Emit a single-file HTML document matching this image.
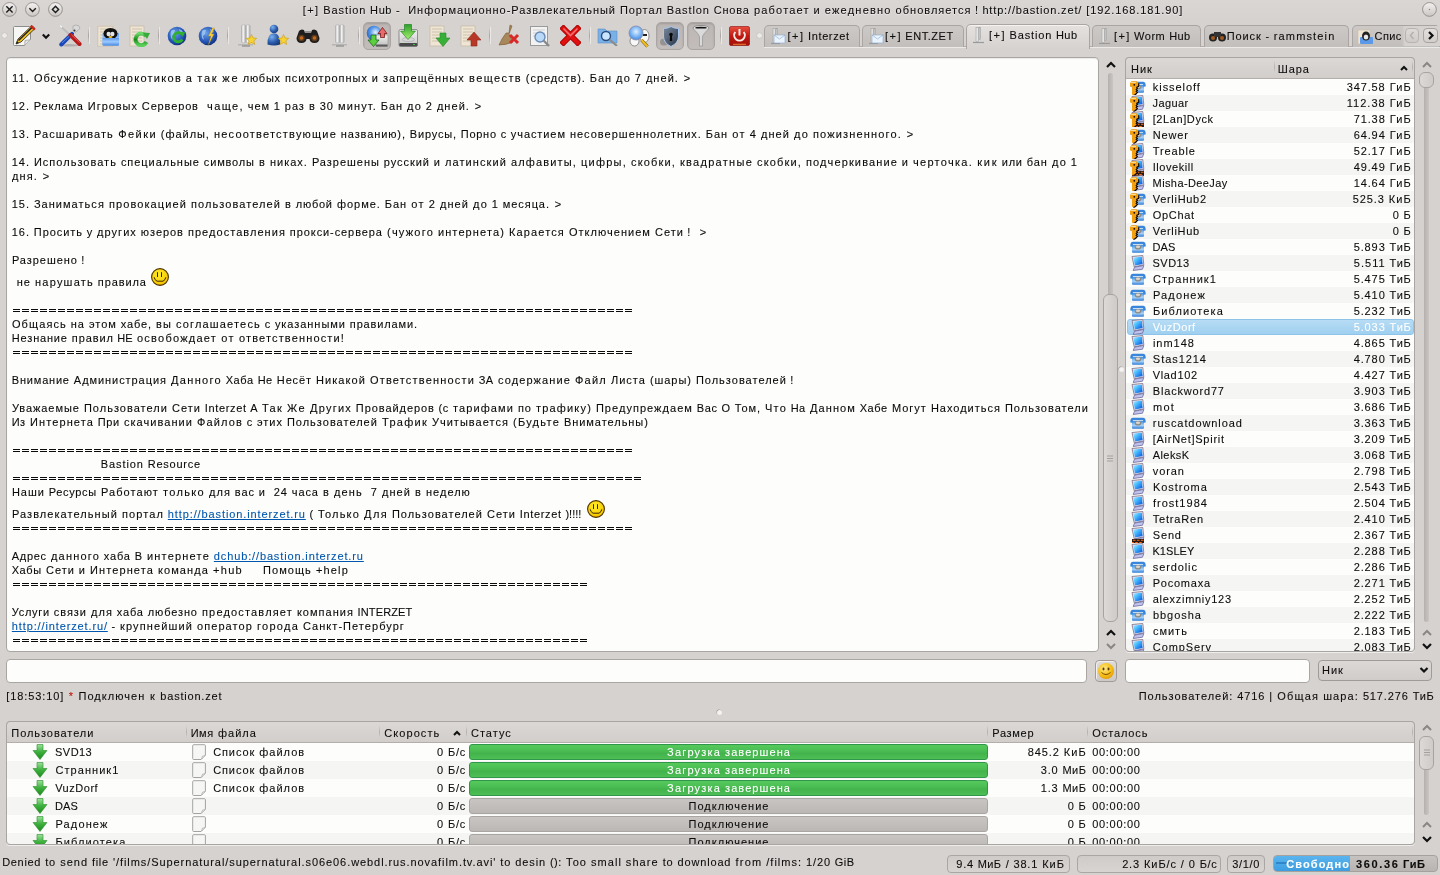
<!DOCTYPE html><html><head><meta charset="utf-8"><style>
html,body{margin:0;padding:0;}
body{width:1440px;height:875px;overflow:hidden;position:relative;background:#d6d2d0;font-family:"Liberation Sans",sans-serif;}
.t{position:absolute;white-space:pre;-webkit-text-stroke:0.1px currentColor;}
a{color:#0057ae;text-decoration:underline;}
</style></head><body><div id="root" style="position:absolute;left:0;top:0;width:1440px;height:875px;will-change:transform"><div style="position:absolute;left:0px;top:0px;width:1440px;height:20px;background:linear-gradient(#dad6d4,#d6d2d0)"></div>
<div style="position:absolute;left:6px;top:57px;width:1093px;height:595px;background:#fdfdfc;border:1px solid #a9a5a2;border-radius:4px;box-sizing:border-box;box-shadow:inset 0 1px 1px rgba(0,0,0,0.08)"></div>
<div style="position:absolute;left:1125px;top:57px;width:290px;height:595px;background:#fdfdfc;border:1px solid #a9a5a2;border-radius:4px;box-sizing:border-box;overflow:hidden"></div>
<div style="position:absolute;left:6px;top:659px;width:1081px;height:24px;background:#fdfdfc;border:1px solid #a9a5a2;border-radius:4px;box-sizing:border-box"></div>
<div style="position:absolute;left:1095px;top:660px;width:22px;height:22px;background:linear-gradient(#dedad8,#cdc9c6);border:1px solid #a09b98;border-radius:4px;box-sizing:border-box;box-shadow:inset 1px 1px 0 #f2f0ef"></div>
<div style="position:absolute;left:1125px;top:659px;width:185px;height:24px;background:#fdfdfc;border:1px solid #a9a5a2;border-radius:4px;box-sizing:border-box"></div>
<div style="position:absolute;left:1318px;top:660px;width:114px;height:21px;background:linear-gradient(#dcd8d6,#d0ccc9);border:1px solid #a09b98;border-radius:4px;box-sizing:border-box"></div>
<div style="position:absolute;left:6px;top:721px;width:1409px;height:124px;background:#fdfdfc;border:1px solid #a9a5a2;border-radius:4px;box-sizing:border-box;overflow:hidden"></div>
<div class="t" style="left:11.99px;top:72px;font-size:11px;line-height:13px;color:#0a0a0a;font-weight:normal;letter-spacing:1.172px;">11.</div>
<div class="t" style="left:33.90px;top:72px;font-size:11px;line-height:13px;color:#0a0a0a;font-weight:normal;letter-spacing:0.991px;">Обсуждение</div>
<div class="t" style="left:112.04px;top:72px;font-size:11px;line-height:13px;color:#0a0a0a;font-weight:normal;letter-spacing:1.280px;">наркотиков</div>
<div class="t" style="left:185.84px;top:72px;font-size:11px;line-height:13px;color:#0a0a0a;font-weight:normal;letter-spacing:0.875px;">а</div>
<div class="t" style="left:197.26px;top:72px;font-size:11px;line-height:13px;color:#0a0a0a;font-weight:normal;letter-spacing:1.714px;">так</div>
<div class="t" style="left:222.28px;top:72px;font-size:11px;line-height:13px;color:#0a0a0a;font-weight:normal;letter-spacing:1.758px;">же</div>
<div class="t" style="left:242.76px;top:72px;font-size:11px;line-height:13px;color:#0a0a0a;font-weight:normal;letter-spacing:0.725px;">любых</div>
<div class="t" style="left:284.88px;top:72px;font-size:11px;line-height:13px;color:#0a0a0a;font-weight:normal;letter-spacing:0.952px;">психотропных</div>
<div class="t" style="left:371.82px;top:72px;font-size:11px;line-height:13px;color:#0a0a0a;font-weight:normal;letter-spacing:0.844px;">и</div>
<div class="t" style="left:382.94px;top:72px;font-size:11px;line-height:13px;color:#0a0a0a;font-weight:normal;letter-spacing:1.084px;">запрещённых</div>
<div class="t" style="left:469.10px;top:72px;font-size:11px;line-height:13px;color:#0a0a0a;font-weight:normal;letter-spacing:1.391px;">веществ</div>
<div class="t" style="left:525.87px;top:72px;font-size:11px;line-height:13px;color:#0a0a0a;font-weight:normal;letter-spacing:0.931px;">(средств).</div>
<div class="t" style="left:589.83px;top:72px;font-size:11px;line-height:13px;color:#0a0a0a;font-weight:normal;letter-spacing:0.859px;">Бан</div>
<div class="t" style="left:616.01px;top:72px;font-size:11px;line-height:13px;color:#0a0a0a;font-weight:normal;letter-spacing:1.227px;">до</div>
<div class="t" style="left:634.84px;top:72px;font-size:11px;line-height:13px;color:#0a0a0a;font-weight:normal;letter-spacing:0.875px;">7</div>
<div class="t" style="left:645.92px;top:72px;font-size:11px;line-height:13px;color:#0a0a0a;font-weight:normal;letter-spacing:1.038px;">дней.</div>
<div class="t" style="left:683.68px;top:72px;font-size:11px;line-height:13px;color:#0a0a0a;font-weight:normal;letter-spacing:2.562px;">&gt;</div>
<div class="t" style="left:11.85px;top:100px;font-size:11px;line-height:13px;color:#0a0a0a;font-weight:normal;letter-spacing:0.901px;">12.</div>
<div class="t" style="left:33.82px;top:100px;font-size:11px;line-height:13px;color:#0a0a0a;font-weight:normal;letter-spacing:0.839px;">Реклама</div>
<div class="t" style="left:87.87px;top:100px;font-size:11px;line-height:13px;color:#0a0a0a;font-weight:normal;letter-spacing:0.942px;">Игровых</div>
<div class="t" style="left:141.83px;top:100px;font-size:11px;line-height:13px;color:#0a0a0a;font-weight:normal;letter-spacing:0.861px;">Серверов</div>
<div class="t" style="left:207.10px;top:100px;font-size:11px;line-height:13px;color:#0a0a0a;font-weight:normal;letter-spacing:1.409px;">чаще,</div>
<div class="t" style="left:247.83px;top:100px;font-size:11px;line-height:13px;color:#0a0a0a;font-weight:normal;letter-spacing:0.859px;">чем</div>
<div class="t" style="left:273.84px;top:100px;font-size:11px;line-height:13px;color:#0a0a0a;font-weight:normal;letter-spacing:0.875px;">1</div>
<div class="t" style="left:284.87px;top:100px;font-size:11px;line-height:13px;color:#0a0a0a;font-weight:normal;letter-spacing:0.948px;">раз</div>
<div class="t" style="left:308.98px;top:100px;font-size:11px;line-height:13px;color:#0a0a0a;font-weight:normal;letter-spacing:1.156px;">в</div>
<div class="t" style="left:319.84px;top:100px;font-size:11px;line-height:13px;color:#0a0a0a;font-weight:normal;letter-spacing:0.875px;">30</div>
<div class="t" style="left:337.97px;top:100px;font-size:11px;line-height:13px;color:#0a0a0a;font-weight:normal;letter-spacing:1.138px;">минут.</div>
<div class="t" style="left:380.83px;top:100px;font-size:11px;line-height:13px;color:#0a0a0a;font-weight:normal;letter-spacing:0.859px;">Бан</div>
<div class="t" style="left:407.01px;top:100px;font-size:11px;line-height:13px;color:#0a0a0a;font-weight:normal;letter-spacing:1.227px;">до</div>
<div class="t" style="left:425.84px;top:100px;font-size:11px;line-height:13px;color:#0a0a0a;font-weight:normal;letter-spacing:0.875px;">2</div>
<div class="t" style="left:436.92px;top:100px;font-size:11px;line-height:13px;color:#0a0a0a;font-weight:normal;letter-spacing:1.038px;">дней.</div>
<div class="t" style="left:474.68px;top:100px;font-size:11px;line-height:13px;color:#0a0a0a;font-weight:normal;letter-spacing:2.562px;">&gt;</div>
<div class="t" style="left:11.85px;top:128px;font-size:11px;line-height:13px;color:#0a0a0a;font-weight:normal;letter-spacing:0.901px;">13.</div>
<div class="t" style="left:33.94px;top:128px;font-size:11px;line-height:13px;color:#0a0a0a;font-weight:normal;letter-spacing:1.075px;">Расшаривать</div>
<div class="t" style="left:118.14px;top:128px;font-size:11px;line-height:13px;color:#0a0a0a;font-weight:normal;letter-spacing:1.481px;">Фейки</div>
<div class="t" style="left:160.87px;top:128px;font-size:11px;line-height:13px;color:#0a0a0a;font-weight:normal;letter-spacing:0.949px;">(файлы,</div>
<div class="t" style="left:214.00px;top:128px;font-size:11px;line-height:13px;color:#0a0a0a;font-weight:normal;letter-spacing:1.210px;">несоответствующие</div>
<div class="t" style="left:340.84px;top:128px;font-size:11px;line-height:13px;color:#0a0a0a;font-weight:normal;letter-spacing:0.886px;">названию),</div>
<div class="t" style="left:409.81px;top:128px;font-size:11px;line-height:13px;color:#0a0a0a;font-weight:normal;letter-spacing:0.810px;">Вирусы,</div>
<div class="t" style="left:460.77px;top:128px;font-size:11px;line-height:13px;color:#0a0a0a;font-weight:normal;letter-spacing:0.731px;">Порно</div>
<div class="t" style="left:500.65px;top:128px;font-size:11px;line-height:13px;color:#0a0a0a;font-weight:normal;letter-spacing:0.500px;">с</div>
<div class="t" style="left:510.86px;top:128px;font-size:11px;line-height:13px;color:#0a0a0a;font-weight:normal;letter-spacing:0.910px;">участием</div>
<div class="t" style="left:569.90px;top:128px;font-size:11px;line-height:13px;color:#0a0a0a;font-weight:normal;letter-spacing:1.008px;">несовершеннолетних.</div>
<div class="t" style="left:705.83px;top:128px;font-size:11px;line-height:13px;color:#0a0a0a;font-weight:normal;letter-spacing:0.859px;">Бан</div>
<div class="t" style="left:732.17px;top:128px;font-size:11px;line-height:13px;color:#0a0a0a;font-weight:normal;letter-spacing:1.539px;">от</div>
<div class="t" style="left:749.84px;top:128px;font-size:11px;line-height:13px;color:#0a0a0a;font-weight:normal;letter-spacing:0.875px;">4</div>
<div class="t" style="left:760.93px;top:128px;font-size:11px;line-height:13px;color:#0a0a0a;font-weight:normal;letter-spacing:1.059px;">дней</div>
<div class="t" style="left:794.01px;top:128px;font-size:11px;line-height:13px;color:#0a0a0a;font-weight:normal;letter-spacing:1.227px;">до</div>
<div class="t" style="left:812.98px;top:128px;font-size:11px;line-height:13px;color:#0a0a0a;font-weight:normal;letter-spacing:1.161px;">пожизненного.</div>
<div class="t" style="left:906.68px;top:128px;font-size:11px;line-height:13px;color:#0a0a0a;font-weight:normal;letter-spacing:2.562px;">&gt;</div>
<div class="t" style="left:11.85px;top:156px;font-size:11px;line-height:13px;color:#0a0a0a;font-weight:normal;letter-spacing:0.901px;">14.</div>
<div class="t" style="left:33.91px;top:156px;font-size:11px;line-height:13px;color:#0a0a0a;font-weight:normal;letter-spacing:1.017px;">Использовать</div>
<div class="t" style="left:120.88px;top:156px;font-size:11px;line-height:13px;color:#0a0a0a;font-weight:normal;letter-spacing:0.964px;">специальные</div>
<div class="t" style="left:203.82px;top:156px;font-size:11px;line-height:13px;color:#0a0a0a;font-weight:normal;letter-spacing:0.837px;">символы</div>
<div class="t" style="left:258.98px;top:156px;font-size:11px;line-height:13px;color:#0a0a0a;font-weight:normal;letter-spacing:1.156px;">в</div>
<div class="t" style="left:269.90px;top:156px;font-size:11px;line-height:13px;color:#0a0a0a;font-weight:normal;letter-spacing:1.008px;">никах.</div>
<div class="t" style="left:311.89px;top:156px;font-size:11px;line-height:13px;color:#0a0a0a;font-weight:normal;letter-spacing:0.981px;">Разрешены</div>
<div class="t" style="left:383.87px;top:156px;font-size:11px;line-height:13px;color:#0a0a0a;font-weight:normal;letter-spacing:0.931px;">русский</div>
<div class="t" style="left:433.82px;top:156px;font-size:11px;line-height:13px;color:#0a0a0a;font-weight:normal;letter-spacing:0.844px;">и</div>
<div class="t" style="left:444.95px;top:156px;font-size:11px;line-height:13px;color:#0a0a0a;font-weight:normal;letter-spacing:1.094px;">латинский</div>
<div class="t" style="left:510.97px;top:156px;font-size:11px;line-height:13px;color:#0a0a0a;font-weight:normal;letter-spacing:1.144px;">алфавиты,</div>
<div class="t" style="left:581.02px;top:156px;font-size:11px;line-height:13px;color:#0a0a0a;font-weight:normal;letter-spacing:1.237px;">цифры,</div>
<div class="t" style="left:630.98px;top:156px;font-size:11px;line-height:13px;color:#0a0a0a;font-weight:normal;letter-spacing:1.161px;">скобки,</div>
<div class="t" style="left:680.04px;top:156px;font-size:11px;line-height:13px;color:#0a0a0a;font-weight:normal;letter-spacing:1.280px;">квадратные</div>
<div class="t" style="left:756.98px;top:156px;font-size:11px;line-height:13px;color:#0a0a0a;font-weight:normal;letter-spacing:1.161px;">скобки,</div>
<div class="t" style="left:805.96px;top:156px;font-size:11px;line-height:13px;color:#0a0a0a;font-weight:normal;letter-spacing:1.126px;">подчеркивание</div>
<div class="t" style="left:901.82px;top:156px;font-size:11px;line-height:13px;color:#0a0a0a;font-weight:normal;letter-spacing:0.844px;">и</div>
<div class="t" style="left:913.04px;top:156px;font-size:11px;line-height:13px;color:#0a0a0a;font-weight:normal;letter-spacing:1.280px;">черточка.</div>
<div class="t" style="left:977.27px;top:156px;font-size:11px;line-height:13px;color:#0a0a0a;font-weight:normal;letter-spacing:1.740px;">кик</div>
<div class="t" style="left:1001.78px;top:156px;font-size:11px;line-height:13px;color:#0a0a0a;font-weight:normal;letter-spacing:0.760px;">или</div>
<div class="t" style="left:1026.86px;top:156px;font-size:11px;line-height:13px;color:#0a0a0a;font-weight:normal;letter-spacing:0.917px;">бан</div>
<div class="t" style="left:1052.01px;top:156px;font-size:11px;line-height:13px;color:#0a0a0a;font-weight:normal;letter-spacing:1.227px;">до</div>
<div class="t" style="left:1070.84px;top:156px;font-size:11px;line-height:13px;color:#0a0a0a;font-weight:normal;letter-spacing:0.875px;">1</div>
<div class="t" style="left:11.96px;top:170px;font-size:11px;line-height:13px;color:#0a0a0a;font-weight:normal;letter-spacing:1.121px;">дня.</div>
<div class="t" style="left:42.68px;top:170px;font-size:11px;line-height:13px;color:#0a0a0a;font-weight:normal;letter-spacing:2.562px;">&gt;</div>
<div class="t" style="left:11.85px;top:198px;font-size:11px;line-height:13px;color:#0a0a0a;font-weight:normal;letter-spacing:0.901px;">15.</div>
<div class="t" style="left:33.92px;top:198px;font-size:11px;line-height:13px;color:#0a0a0a;font-weight:normal;letter-spacing:1.034px;">Заниматься</div>
<div class="t" style="left:108.95px;top:198px;font-size:11px;line-height:13px;color:#0a0a0a;font-weight:normal;letter-spacing:1.098px;">провокацией</div>
<div class="t" style="left:190.94px;top:198px;font-size:11px;line-height:13px;color:#0a0a0a;font-weight:normal;letter-spacing:1.079px;">пользователей</div>
<div class="t" style="left:284.98px;top:198px;font-size:11px;line-height:13px;color:#0a0a0a;font-weight:normal;letter-spacing:1.156px;">в</div>
<div class="t" style="left:295.78px;top:198px;font-size:11px;line-height:13px;color:#0a0a0a;font-weight:normal;letter-spacing:0.753px;">любой</div>
<div class="t" style="left:336.90px;top:198px;font-size:11px;line-height:13px;color:#0a0a0a;font-weight:normal;letter-spacing:0.995px;">форме.</div>
<div class="t" style="left:384.83px;top:198px;font-size:11px;line-height:13px;color:#0a0a0a;font-weight:normal;letter-spacing:0.859px;">Бан</div>
<div class="t" style="left:411.17px;top:198px;font-size:11px;line-height:13px;color:#0a0a0a;font-weight:normal;letter-spacing:1.539px;">от</div>
<div class="t" style="left:428.84px;top:198px;font-size:11px;line-height:13px;color:#0a0a0a;font-weight:normal;letter-spacing:0.875px;">2</div>
<div class="t" style="left:439.93px;top:198px;font-size:11px;line-height:13px;color:#0a0a0a;font-weight:normal;letter-spacing:1.059px;">дней</div>
<div class="t" style="left:473.01px;top:198px;font-size:11px;line-height:13px;color:#0a0a0a;font-weight:normal;letter-spacing:1.227px;">до</div>
<div class="t" style="left:491.84px;top:198px;font-size:11px;line-height:13px;color:#0a0a0a;font-weight:normal;letter-spacing:0.875px;">1</div>
<div class="t" style="left:502.86px;top:198px;font-size:11px;line-height:13px;color:#0a0a0a;font-weight:normal;letter-spacing:0.911px;">месяца.</div>
<div class="t" style="left:554.68px;top:198px;font-size:11px;line-height:13px;color:#0a0a0a;font-weight:normal;letter-spacing:2.562px;">&gt;</div>
<div class="t" style="left:11.85px;top:226px;font-size:11px;line-height:13px;color:#0a0a0a;font-weight:normal;letter-spacing:0.901px;">16.</div>
<div class="t" style="left:33.86px;top:226px;font-size:11px;line-height:13px;color:#0a0a0a;font-weight:normal;letter-spacing:0.920px;">Просить</div>
<div class="t" style="left:86.65px;top:226px;font-size:11px;line-height:13px;color:#0a0a0a;font-weight:normal;letter-spacing:0.500px;">у</div>
<div class="t" style="left:96.94px;top:226px;font-size:11px;line-height:13px;color:#0a0a0a;font-weight:normal;letter-spacing:1.070px;">других</div>
<div class="t" style="left:140.87px;top:226px;font-size:11px;line-height:13px;color:#0a0a0a;font-weight:normal;letter-spacing:0.938px;">юзеров</div>
<div class="t" style="left:187.92px;top:226px;font-size:11px;line-height:13px;color:#0a0a0a;font-weight:normal;letter-spacing:1.048px;">предоставления</div>
<div class="t" style="left:289.86px;top:226px;font-size:11px;line-height:13px;color:#0a0a0a;font-weight:normal;letter-spacing:0.911px;">прокси-сервера</div>
<div class="t" style="left:387.01px;top:226px;font-size:11px;line-height:13px;color:#0a0a0a;font-weight:normal;letter-spacing:1.230px;">(чужого</div>
<div class="t" style="left:437.95px;top:226px;font-size:11px;line-height:13px;color:#0a0a0a;font-weight:normal;letter-spacing:1.109px;">интернета)</div>
<div class="t" style="left:508.97px;top:226px;font-size:11px;line-height:13px;color:#0a0a0a;font-weight:normal;letter-spacing:1.139px;">Карается</div>
<div class="t" style="left:568.91px;top:226px;font-size:11px;line-height:13px;color:#0a0a0a;font-weight:normal;letter-spacing:1.026px;">Отключением</div>
<div class="t" style="left:654.91px;top:226px;font-size:11px;line-height:13px;color:#0a0a0a;font-weight:normal;letter-spacing:1.027px;">Сети</div>
<div class="t" style="left:687.37px;top:226px;font-size:11px;line-height:13px;color:#0a0a0a;font-weight:normal;letter-spacing:-0.062px;">!</div>
<div class="t" style="left:699.68px;top:226px;font-size:11px;line-height:13px;color:#0a0a0a;font-weight:normal;letter-spacing:2.562px;">&gt;</div>
<div class="t" style="left:11.88px;top:254px;font-size:11px;line-height:13px;color:#0a0a0a;font-weight:normal;letter-spacing:0.957px;">Разрешено</div>
<div class="t" style="left:81.37px;top:254px;font-size:11px;line-height:13px;color:#0a0a0a;font-weight:normal;letter-spacing:-0.062px;">!</div>
<div class="t" style="left:16.85px;top:276px;font-size:11px;line-height:13px;color:#0a0a0a;font-weight:normal;letter-spacing:0.898px;">не</div>
<div class="t" style="left:35.02px;top:276px;font-size:11px;line-height:13px;color:#0a0a0a;font-weight:normal;letter-spacing:1.230px;">нарушать</div>
<div class="t" style="left:97.85px;top:276px;font-size:11px;line-height:13px;color:#0a0a0a;font-weight:normal;letter-spacing:0.897px;">правила</div>
<div style="position:absolute;left:13px;top:309px;width:619px;height:1px;background:repeating-linear-gradient(90deg,#0a0a0a 0 7px,transparent 7px 9px)"></div>
<div style="position:absolute;left:13px;top:311px;width:619px;height:1px;background:repeating-linear-gradient(90deg,#0a0a0a 0 7px,transparent 7px 9px)"></div>
<div class="t" style="left:11.96px;top:318px;font-size:11px;line-height:13px;color:#0a0a0a;font-weight:normal;letter-spacing:1.112px;">Общаясь</div>
<div class="t" style="left:70.85px;top:318px;font-size:11px;line-height:13px;color:#0a0a0a;font-weight:normal;letter-spacing:0.898px;">на</div>
<div class="t" style="left:88.90px;top:318px;font-size:11px;line-height:13px;color:#0a0a0a;font-weight:normal;letter-spacing:1.008px;">этом</div>
<div class="t" style="left:120.81px;top:318px;font-size:11px;line-height:13px;color:#0a0a0a;font-weight:normal;letter-spacing:0.828px;">хабе,</div>
<div class="t" style="left:155.96px;top:318px;font-size:11px;line-height:13px;color:#0a0a0a;font-weight:normal;letter-spacing:1.125px;">вы</div>
<div class="t" style="left:175.98px;top:318px;font-size:11px;line-height:13px;color:#0a0a0a;font-weight:normal;letter-spacing:1.165px;">соглашаетесь</div>
<div class="t" style="left:264.65px;top:318px;font-size:11px;line-height:13px;color:#0a0a0a;font-weight:normal;letter-spacing:0.500px;">с</div>
<div class="t" style="left:274.88px;top:318px;font-size:11px;line-height:13px;color:#0a0a0a;font-weight:normal;letter-spacing:0.952px;">указанными</div>
<div class="t" style="left:349.83px;top:318px;font-size:11px;line-height:13px;color:#0a0a0a;font-weight:normal;letter-spacing:0.852px;">правилами.</div>
<div class="t" style="left:11.81px;top:332px;font-size:11px;line-height:13px;color:#0a0a0a;font-weight:normal;letter-spacing:0.824px;">Незнание</div>
<div class="t" style="left:71.85px;top:332px;font-size:11px;line-height:13px;color:#0a0a0a;font-weight:normal;letter-spacing:0.898px;">правил</div>
<div class="t" style="left:117.33px;top:332px;font-size:11px;line-height:13px;color:#0a0a0a;font-weight:normal;letter-spacing:-0.141px;">НЕ</div>
<div class="t" style="left:137.02px;top:332px;font-size:11px;line-height:13px;color:#0a0a0a;font-weight:normal;letter-spacing:1.233px;">освобождает</div>
<div class="t" style="left:221.17px;top:332px;font-size:11px;line-height:13px;color:#0a0a0a;font-weight:normal;letter-spacing:1.539px;">от</div>
<div class="t" style="left:238.97px;top:332px;font-size:11px;line-height:13px;color:#0a0a0a;font-weight:normal;letter-spacing:1.145px;">ответственности!</div>
<div style="position:absolute;left:13px;top:351px;width:619px;height:1px;background:repeating-linear-gradient(90deg,#0a0a0a 0 7px,transparent 7px 9px)"></div>
<div style="position:absolute;left:13px;top:353px;width:619px;height:1px;background:repeating-linear-gradient(90deg,#0a0a0a 0 7px,transparent 7px 9px)"></div>
<div class="t" style="left:11.80px;top:374px;font-size:11px;line-height:13px;color:#0a0a0a;font-weight:normal;letter-spacing:0.803px;">Внимание</div>
<div class="t" style="left:73.87px;top:374px;font-size:11px;line-height:13px;color:#0a0a0a;font-weight:normal;letter-spacing:0.934px;">Администрация</div>
<div class="t" style="left:171.06px;top:374px;font-size:11px;line-height:13px;color:#0a0a0a;font-weight:normal;letter-spacing:1.324px;">Данного</div>
<div class="t" style="left:225.70px;top:374px;font-size:11px;line-height:13px;color:#0a0a0a;font-weight:normal;letter-spacing:0.594px;">Хаба</div>
<div class="t" style="left:257.63px;top:374px;font-size:11px;line-height:13px;color:#0a0a0a;font-weight:normal;letter-spacing:0.469px;">Не</div>
<div class="t" style="left:276.83px;top:374px;font-size:11px;line-height:13px;color:#0a0a0a;font-weight:normal;letter-spacing:0.856px;">Несёт</div>
<div class="t" style="left:315.94px;top:374px;font-size:11px;line-height:13px;color:#0a0a0a;font-weight:normal;letter-spacing:1.076px;">Никакой</div>
<div class="t" style="left:369.99px;top:374px;font-size:11px;line-height:13px;color:#0a0a0a;font-weight:normal;letter-spacing:1.179px;">Ответственности</div>
<div class="t" style="left:478.65px;top:374px;font-size:11px;line-height:13px;color:#0a0a0a;font-weight:normal;letter-spacing:0.508px;">ЗА</div>
<div class="t" style="left:497.95px;top:374px;font-size:11px;line-height:13px;color:#0a0a0a;font-weight:normal;letter-spacing:1.103px;">содержание</div>
<div class="t" style="left:575.02px;top:374px;font-size:11px;line-height:13px;color:#0a0a0a;font-weight:normal;letter-spacing:1.238px;">Файл</div>
<div class="t" style="left:610.91px;top:374px;font-size:11px;line-height:13px;color:#0a0a0a;font-weight:normal;letter-spacing:1.019px;">Листа</div>
<div class="t" style="left:649.88px;top:374px;font-size:11px;line-height:13px;color:#0a0a0a;font-weight:normal;letter-spacing:0.951px;">(шары)</div>
<div class="t" style="left:695.90px;top:374px;font-size:11px;line-height:13px;color:#0a0a0a;font-weight:normal;letter-spacing:1.006px;">Пользователей</div>
<div class="t" style="left:790.37px;top:374px;font-size:11px;line-height:13px;color:#0a0a0a;font-weight:normal;letter-spacing:-0.062px;">!</div>
<div class="t" style="left:11.88px;top:402px;font-size:11px;line-height:13px;color:#0a0a0a;font-weight:normal;letter-spacing:0.957px;">Уважаемые</div>
<div class="t" style="left:83.91px;top:402px;font-size:11px;line-height:13px;color:#0a0a0a;font-weight:normal;letter-spacing:1.017px;">Пользователи</div>
<div class="t" style="left:171.91px;top:402px;font-size:11px;line-height:13px;color:#0a0a0a;font-weight:normal;letter-spacing:1.027px;">Сети</div>
<div class="t" style="left:204.73px;top:402px;font-size:11px;line-height:13px;color:#0a0a0a;font-weight:normal;letter-spacing:0.664px;">Interzet</div>
<div class="t" style="left:250.23px;top:402px;font-size:11px;line-height:13px;color:#0a0a0a;font-weight:normal;letter-spacing:-0.344px;">А</div>
<div class="t" style="left:262.04px;top:402px;font-size:11px;line-height:13px;color:#0a0a0a;font-weight:normal;letter-spacing:1.281px;">Так</div>
<div class="t" style="left:287.11px;top:402px;font-size:11px;line-height:13px;color:#0a0a0a;font-weight:normal;letter-spacing:1.430px;">Же</div>
<div class="t" style="left:310.02px;top:402px;font-size:11px;line-height:13px;color:#0a0a0a;font-weight:normal;letter-spacing:1.232px;">Других</div>
<div class="t" style="left:355.87px;top:402px;font-size:11px;line-height:13px;color:#0a0a0a;font-weight:normal;letter-spacing:0.932px;">Провайдеров</div>
<div class="t" style="left:438.61px;top:402px;font-size:11px;line-height:13px;color:#0a0a0a;font-weight:normal;letter-spacing:0.414px;">(с</div>
<div class="t" style="left:452.95px;top:402px;font-size:11px;line-height:13px;color:#0a0a0a;font-weight:normal;letter-spacing:1.104px;">тарифами</div>
<div class="t" style="left:517.88px;top:402px;font-size:11px;line-height:13px;color:#0a0a0a;font-weight:normal;letter-spacing:0.961px;">по</div>
<div class="t" style="left:535.99px;top:402px;font-size:11px;line-height:13px;color:#0a0a0a;font-weight:normal;letter-spacing:1.178px;">трафику)</div>
<div class="t" style="left:595.92px;top:402px;font-size:11px;line-height:13px;color:#0a0a0a;font-weight:normal;letter-spacing:1.041px;">Предупреждаем</div>
<div class="t" style="left:696.74px;top:402px;font-size:11px;line-height:13px;color:#0a0a0a;font-weight:normal;letter-spacing:0.677px;">Вас</div>
<div class="t" style="left:721.62px;top:402px;font-size:11px;line-height:13px;color:#0a0a0a;font-weight:normal;letter-spacing:0.438px;">О</div>
<div class="t" style="left:734.82px;top:402px;font-size:11px;line-height:13px;color:#0a0a0a;font-weight:normal;letter-spacing:0.848px;">Том,</div>
<div class="t" style="left:765.00px;top:402px;font-size:11px;line-height:13px;color:#0a0a0a;font-weight:normal;letter-spacing:1.208px;">Что</div>
<div class="t" style="left:790.63px;top:402px;font-size:11px;line-height:13px;color:#0a0a0a;font-weight:normal;letter-spacing:0.469px;">На</div>
<div class="t" style="left:809.95px;top:402px;font-size:11px;line-height:13px;color:#0a0a0a;font-weight:normal;letter-spacing:1.099px;">Данном</div>
<div class="t" style="left:859.68px;top:402px;font-size:11px;line-height:13px;color:#0a0a0a;font-weight:normal;letter-spacing:0.562px;">Хабе</div>
<div class="t" style="left:891.90px;top:402px;font-size:11px;line-height:13px;color:#0a0a0a;font-weight:normal;letter-spacing:1.006px;">Могут</div>
<div class="t" style="left:930.89px;top:402px;font-size:11px;line-height:13px;color:#0a0a0a;font-weight:normal;letter-spacing:0.989px;">Находиться</div>
<div class="t" style="left:1004.91px;top:402px;font-size:11px;line-height:13px;color:#0a0a0a;font-weight:normal;letter-spacing:1.017px;">Пользователи</div>
<div class="t" style="left:11.66px;top:416px;font-size:11px;line-height:13px;color:#0a0a0a;font-weight:normal;letter-spacing:0.523px;">Из</div>
<div class="t" style="left:29.96px;top:416px;font-size:11px;line-height:13px;color:#0a0a0a;font-weight:normal;letter-spacing:1.111px;">Интернета</div>
<div class="t" style="left:97.70px;top:416px;font-size:11px;line-height:13px;color:#0a0a0a;font-weight:normal;letter-spacing:0.609px;">При</div>
<div class="t" style="left:123.92px;top:416px;font-size:11px;line-height:13px;color:#0a0a0a;font-weight:normal;letter-spacing:1.048px;">скачивании</div>
<div class="t" style="left:196.97px;top:416px;font-size:11px;line-height:13px;color:#0a0a0a;font-weight:normal;letter-spacing:1.143px;">Файлов</div>
<div class="t" style="left:246.65px;top:416px;font-size:11px;line-height:13px;color:#0a0a0a;font-weight:normal;letter-spacing:0.500px;">с</div>
<div class="t" style="left:256.89px;top:416px;font-size:11px;line-height:13px;color:#0a0a0a;font-weight:normal;letter-spacing:0.984px;">этих</div>
<div class="t" style="left:286.90px;top:416px;font-size:11px;line-height:13px;color:#0a0a0a;font-weight:normal;letter-spacing:1.006px;">Пользователей</div>
<div class="t" style="left:382.04px;top:416px;font-size:11px;line-height:13px;color:#0a0a0a;font-weight:normal;letter-spacing:1.273px;">Трафик</div>
<div class="t" style="left:431.91px;top:416px;font-size:11px;line-height:13px;color:#0a0a0a;font-weight:normal;letter-spacing:1.020px;">Учитывается</div>
<div class="t" style="left:513.04px;top:416px;font-size:11px;line-height:13px;color:#0a0a0a;font-weight:normal;letter-spacing:1.270px;">(Будьте</div>
<div class="t" style="left:563.88px;top:416px;font-size:11px;line-height:13px;color:#0a0a0a;font-weight:normal;letter-spacing:0.961px;">Внимательны)</div>
<div style="position:absolute;left:13px;top:449px;width:619px;height:1px;background:repeating-linear-gradient(90deg,#0a0a0a 0 7px,transparent 7px 9px)"></div>
<div style="position:absolute;left:13px;top:451px;width:619px;height:1px;background:repeating-linear-gradient(90deg,#0a0a0a 0 7px,transparent 7px 9px)"></div>
<div class="t" style="left:100.85px;top:458px;font-size:11px;line-height:13px;color:#0a0a0a;font-weight:normal;letter-spacing:0.900px;">Bastion</div>
<div class="t" style="left:147.77px;top:458px;font-size:11px;line-height:13px;color:#0a0a0a;font-weight:normal;letter-spacing:0.740px;">Resource</div>
<div style="position:absolute;left:13px;top:477px;width:628px;height:1px;background:repeating-linear-gradient(90deg,#0a0a0a 0 7px,transparent 7px 9px)"></div>
<div style="position:absolute;left:13px;top:479px;width:628px;height:1px;background:repeating-linear-gradient(90deg,#0a0a0a 0 7px,transparent 7px 9px)"></div>
<div class="t" style="left:11.90px;top:486px;font-size:11px;line-height:13px;color:#0a0a0a;font-weight:normal;letter-spacing:0.992px;">Наши</div>
<div class="t" style="left:48.73px;top:486px;font-size:11px;line-height:13px;color:#0a0a0a;font-weight:normal;letter-spacing:0.661px;">Ресурсы</div>
<div class="t" style="left:100.94px;top:486px;font-size:11px;line-height:13px;color:#0a0a0a;font-weight:normal;letter-spacing:1.080px;">Работают</div>
<div class="t" style="left:163.07px;top:486px;font-size:11px;line-height:13px;color:#0a0a0a;font-weight:normal;letter-spacing:1.333px;">только</div>
<div class="t" style="left:208.93px;top:486px;font-size:11px;line-height:13px;color:#0a0a0a;font-weight:normal;letter-spacing:1.068px;">для</div>
<div class="t" style="left:234.84px;top:486px;font-size:11px;line-height:13px;color:#0a0a0a;font-weight:normal;letter-spacing:0.885px;">вас</div>
<div class="t" style="left:258.82px;top:486px;font-size:11px;line-height:13px;color:#0a0a0a;font-weight:normal;letter-spacing:0.844px;">и</div>
<div class="t" style="left:273.84px;top:486px;font-size:11px;line-height:13px;color:#0a0a0a;font-weight:normal;letter-spacing:0.875px;">24</div>
<div class="t" style="left:291.84px;top:486px;font-size:11px;line-height:13px;color:#0a0a0a;font-weight:normal;letter-spacing:0.883px;">часа</div>
<div class="t" style="left:322.98px;top:486px;font-size:11px;line-height:13px;color:#0a0a0a;font-weight:normal;letter-spacing:1.156px;">в</div>
<div class="t" style="left:333.98px;top:486px;font-size:11px;line-height:13px;color:#0a0a0a;font-weight:normal;letter-spacing:1.164px;">день</div>
<div class="t" style="left:370.84px;top:486px;font-size:11px;line-height:13px;color:#0a0a0a;font-weight:normal;letter-spacing:0.875px;">7</div>
<div class="t" style="left:381.93px;top:486px;font-size:11px;line-height:13px;color:#0a0a0a;font-weight:normal;letter-spacing:1.059px;">дней</div>
<div class="t" style="left:414.98px;top:486px;font-size:11px;line-height:13px;color:#0a0a0a;font-weight:normal;letter-spacing:1.156px;">в</div>
<div class="t" style="left:425.92px;top:486px;font-size:11px;line-height:13px;color:#0a0a0a;font-weight:normal;letter-spacing:1.034px;">неделю</div>
<div class="t" style="left:11.93px;top:508px;font-size:11px;line-height:13px;color:#0a0a0a;font-weight:normal;letter-spacing:1.066px;">Развлекательный</div>
<div class="t" style="left:121.95px;top:508px;font-size:11px;line-height:13px;color:#0a0a0a;font-weight:normal;letter-spacing:1.099px;">портал</div>
<div class="t" style="left:167.84px;top:508px;font-size:11px;line-height:13px;color:#0057ae;font-weight:normal;letter-spacing:0.886px;text-decoration:underline;">http://bastion.interzet.ru</div>
<div class="t" style="left:309.56px;top:508px;font-size:11px;line-height:13px;color:#0a0a0a;font-weight:normal;letter-spacing:0.328px;">(</div>
<div class="t" style="left:317.99px;top:508px;font-size:11px;line-height:13px;color:#0a0a0a;font-weight:normal;letter-spacing:1.174px;">Только</div>
<div class="t" style="left:364.10px;top:508px;font-size:11px;line-height:13px;color:#0a0a0a;font-weight:normal;letter-spacing:1.391px;">Для</div>
<div class="t" style="left:391.90px;top:508px;font-size:11px;line-height:13px;color:#0a0a0a;font-weight:normal;letter-spacing:1.006px;">Пользователей</div>
<div class="t" style="left:486.91px;top:508px;font-size:11px;line-height:13px;color:#0a0a0a;font-weight:normal;letter-spacing:1.027px;">Сети</div>
<div class="t" style="left:519.73px;top:508px;font-size:11px;line-height:13px;color:#0a0a0a;font-weight:normal;letter-spacing:0.664px;">Interzet</div>
<div class="t" style="left:565.41px;top:508px;font-size:11px;line-height:13px;color:#0a0a0a;font-weight:normal;letter-spacing:0.022px;">)!!!!</div>
<div style="position:absolute;left:13px;top:527px;width:619px;height:1px;background:repeating-linear-gradient(90deg,#0a0a0a 0 7px,transparent 7px 9px)"></div>
<div style="position:absolute;left:13px;top:529px;width:619px;height:1px;background:repeating-linear-gradient(90deg,#0a0a0a 0 7px,transparent 7px 9px)"></div>
<div class="t" style="left:11.75px;top:550px;font-size:11px;line-height:13px;color:#0a0a0a;font-weight:normal;letter-spacing:0.700px;">Адрес</div>
<div class="t" style="left:50.99px;top:550px;font-size:11px;line-height:13px;color:#0a0a0a;font-weight:normal;letter-spacing:1.185px;">данного</div>
<div class="t" style="left:103.82px;top:550px;font-size:11px;line-height:13px;color:#0a0a0a;font-weight:normal;letter-spacing:0.832px;">хаба</div>
<div class="t" style="left:134.73px;top:550px;font-size:11px;line-height:13px;color:#0a0a0a;font-weight:normal;letter-spacing:0.656px;">В</div>
<div class="t" style="left:147.00px;top:550px;font-size:11px;line-height:13px;color:#0a0a0a;font-weight:normal;letter-spacing:1.196px;">интернете</div>
<div class="t" style="left:213.83px;top:550px;font-size:11px;line-height:13px;color:#0057ae;font-weight:normal;letter-spacing:0.867px;text-decoration:underline;">dchub://bastion.interzet.ru</div>
<div class="t" style="left:11.69px;top:564px;font-size:11px;line-height:13px;color:#0a0a0a;font-weight:normal;letter-spacing:0.582px;">Хабы</div>
<div class="t" style="left:45.91px;top:564px;font-size:11px;line-height:13px;color:#0a0a0a;font-weight:normal;letter-spacing:1.027px;">Сети</div>
<div class="t" style="left:78.82px;top:564px;font-size:11px;line-height:13px;color:#0a0a0a;font-weight:normal;letter-spacing:0.844px;">и</div>
<div class="t" style="left:89.96px;top:564px;font-size:11px;line-height:13px;color:#0a0a0a;font-weight:normal;letter-spacing:1.111px;">Интернета</div>
<div class="t" style="left:157.95px;top:564px;font-size:11px;line-height:13px;color:#0a0a0a;font-weight:normal;letter-spacing:1.092px;">команда</div>
<div class="t" style="left:213.05px;top:564px;font-size:11px;line-height:13px;color:#0a0a0a;font-weight:normal;letter-spacing:1.305px;">+hub</div>
<div class="t" style="left:262.94px;top:564px;font-size:11px;line-height:13px;color:#0a0a0a;font-weight:normal;letter-spacing:1.083px;">Помощь</div>
<div class="t" style="left:315.98px;top:564px;font-size:11px;line-height:13px;color:#0a0a0a;font-weight:normal;letter-spacing:1.153px;">+help</div>
<div style="position:absolute;left:13px;top:583px;width:574px;height:1px;background:repeating-linear-gradient(90deg,#0a0a0a 0 7px,transparent 7px 9px)"></div>
<div style="position:absolute;left:13px;top:585px;width:574px;height:1px;background:repeating-linear-gradient(90deg,#0a0a0a 0 7px,transparent 7px 9px)"></div>
<div class="t" style="left:11.75px;top:606px;font-size:11px;line-height:13px;color:#0a0a0a;font-weight:normal;letter-spacing:0.695px;">Услуги</div>
<div class="t" style="left:53.86px;top:606px;font-size:11px;line-height:13px;color:#0a0a0a;font-weight:normal;letter-spacing:0.925px;">связи</div>
<div class="t" style="left:90.93px;top:606px;font-size:11px;line-height:13px;color:#0a0a0a;font-weight:normal;letter-spacing:1.068px;">для</div>
<div class="t" style="left:116.82px;top:606px;font-size:11px;line-height:13px;color:#0a0a0a;font-weight:normal;letter-spacing:0.832px;">хаба</div>
<div class="t" style="left:147.83px;top:606px;font-size:11px;line-height:13px;color:#0a0a0a;font-weight:normal;letter-spacing:0.862px;">любезно</div>
<div class="t" style="left:201.99px;top:606px;font-size:11px;line-height:13px;color:#0a0a0a;font-weight:normal;letter-spacing:1.171px;">предоставляет</div>
<div class="t" style="left:296.91px;top:606px;font-size:11px;line-height:13px;color:#0a0a0a;font-weight:normal;letter-spacing:1.016px;">компания</div>
<div class="t" style="left:357.48px;top:606px;font-size:11px;line-height:13px;color:#0a0a0a;font-weight:normal;letter-spacing:0.152px;">INTERZET</div>
<div class="t" style="left:11.83px;top:620px;font-size:11px;line-height:13px;color:#0057ae;font-weight:normal;letter-spacing:0.869px;text-decoration:underline;">http://interzet.ru/</div>
<div class="t" style="left:111.56px;top:620px;font-size:11px;line-height:13px;color:#0a0a0a;font-weight:normal;letter-spacing:0.328px;">-</div>
<div class="t" style="left:119.96px;top:620px;font-size:11px;line-height:13px;color:#0a0a0a;font-weight:normal;letter-spacing:1.128px;">крупнейший</div>
<div class="t" style="left:196.94px;top:620px;font-size:11px;line-height:13px;color:#0a0a0a;font-weight:normal;letter-spacing:1.082px;">оператор</div>
<div class="t" style="left:257.03px;top:620px;font-size:11px;line-height:13px;color:#0a0a0a;font-weight:normal;letter-spacing:1.263px;">города</div>
<div class="t" style="left:302.92px;top:620px;font-size:11px;line-height:13px;color:#0a0a0a;font-weight:normal;letter-spacing:1.048px;">Санкт-Петербург</div>
<div style="position:absolute;left:13px;top:639px;width:574px;height:1px;background:repeating-linear-gradient(90deg,#0a0a0a 0 7px,transparent 7px 9px)"></div>
<div style="position:absolute;left:13px;top:641px;width:574px;height:1px;background:repeating-linear-gradient(90deg,#0a0a0a 0 7px,transparent 7px 9px)"></div>
<svg style="position:absolute;left:151px;top:268px;" width="18" height="18" viewBox="0 0 18 18"><defs><radialGradient id="sg151" cx="0.45" cy="0.35" r="0.75"><stop offset="0" stop-color="#ffee30"/><stop offset="0.7" stop-color="#f8cc00"/><stop offset="1" stop-color="#e89000"/></radialGradient></defs>
<circle cx="9" cy="9" r="8.4" fill="url(#sg151)" stroke="#4a3200" stroke-width="1.1"/>
<path d="M6.5 4.2 L6.5 9 M10.5 4.2 L10.5 9" stroke="#3a2800" stroke-width="1"/>
<path d="M3.2 9.3 L4 11.5 L6 13.2 L12 13.2 L14 11.5 L14.8 9.3" fill="none" stroke="#3a2800" stroke-width="1"/></svg>
<svg style="position:absolute;left:587px;top:500px;" width="18" height="18" viewBox="0 0 18 18"><defs><radialGradient id="sg587" cx="0.45" cy="0.35" r="0.75"><stop offset="0" stop-color="#ffee30"/><stop offset="0.7" stop-color="#f8cc00"/><stop offset="1" stop-color="#e89000"/></radialGradient></defs>
<circle cx="9" cy="9" r="8.4" fill="url(#sg587)" stroke="#4a3200" stroke-width="1.1"/>
<path d="M6.5 4.2 L6.5 9 M10.5 4.2 L10.5 9" stroke="#3a2800" stroke-width="1"/>
<path d="M3.2 9.3 L4 11.5 L6 13.2 L12 13.2 L14 11.5 L14.8 9.3" fill="none" stroke="#3a2800" stroke-width="1"/></svg>
<svg style="position:absolute;left:1104px;top:60px;" width="14" height="10" viewBox="0 0 14 10"><path d="M3 7 L7 3 L11 7" fill="none" stroke="#111" stroke-width="2.2"/></svg>
<div style="position:absolute;left:1108px;top:73px;width:5px;height:230px;background:linear-gradient(90deg,#b5b0ad,#c9c5c2);border-radius:3px"></div>
<div style="position:absolute;left:1103px;top:294px;width:15px;height:328px;background:linear-gradient(90deg,#ddd9d7,#cfcbc8);border:1px solid #a8a3a0;border-radius:6px;box-sizing:border-box"></div>
<svg style="position:absolute;left:1103px;top:454px;" width="14" height="10" viewBox="0 0 14 10"><path d="M4 2h6M4 4.5h6M4 7h6" stroke="#a5a09d" stroke-width="1"/></svg>
<svg style="position:absolute;left:1104px;top:628px;" width="14" height="9" viewBox="0 0 14 9"><path d="M3 7 L7 3 L11 7" fill="none" stroke="#111" stroke-width="2.2"/></svg>
<svg style="position:absolute;left:1104px;top:641px;" width="14" height="9" viewBox="0 0 14 9"><path d="M3 3 L7 7 L11 3" fill="none" stroke="#8a8684" stroke-width="2"/></svg>
<div style="position:absolute;left:1119px;top:367px;width:5px;height:5px;background:#f4f3f2;border-radius:50%;box-shadow:-0.5px -0.5px 0.5px #9a9694"></div>
<div style="position:absolute;left:717px;top:710px;width:5px;height:5px;background:#f4f3f2;border-radius:50%;box-shadow:-0.5px -0.5px 0.5px #9a9694"></div>
<div style="position:absolute;left:1126px;top:58px;width:288px;height:20px;background:linear-gradient(#dcd8d6,#d2ceca);border-bottom:1px solid #b3aeab;border-top-left-radius:3px;border-top-right-radius:3px"></div>
<div style="position:absolute;left:1274px;top:61px;width:1px;height:12px;background:linear-gradient(#d6d2d0,#b5b0ad,#d6d2d0)"></div>
<div style="position:absolute;left:1412px;top:61px;width:1px;height:12px;background:linear-gradient(#d6d2d0,#b5b0ad,#d6d2d0)"></div>
<div class="t" style="left:1130.92px;top:63px;font-size:11px;line-height:13px;color:#0e0d0c;font-weight:normal;letter-spacing:1.031px;">Ник</div>
<div class="t" style="left:1277.85px;top:63px;font-size:11px;line-height:13px;color:#0e0d0c;font-weight:normal;letter-spacing:0.891px;">Шара</div>
<svg style="position:absolute;left:1399px;top:64px;" width="10" height="8" viewBox="0 0 10 8"><path d="M2 6 L5 3 L8 6" fill="none" stroke="#111" stroke-width="2"/></svg>
<svg style="position:absolute;left:1130px;top:81px" width="16" height="13" viewBox="0 0 16 13">
<defs><linearGradient id="gp" x1="0" y1="0" x2="0" y2="1"><stop offset="0" stop-color="#3f8ee0"/><stop offset="0.55" stop-color="#a8d4fa"/><stop offset="1" stop-color="#2c78d4"/></linearGradient></defs>
<path d="M2 4 L14 4 L14 11 Q14 11.8 13 11.8 L3 11.8 Q2 11.8 2 11 Z" fill="url(#gp)"/>
<path d="M0.3 5.5 Q0 1 3 0.8 L13 0.8 Q16 1 15.7 5.5 L13.5 5.7 L13 3.3 L3 3.3 L2.5 5.7 Z" fill="#3a86da"/>
<ellipse cx="8" cy="6.2" rx="3.2" ry="2.3" fill="#8e8a84"/><ellipse cx="8" cy="5.8" rx="2.2" ry="1.4" fill="#d8d4cc"/>
</svg><svg style="position:absolute;left:1129px;top:81px" width="11" height="15" viewBox="0 0 11 15">
<path d="M2.5 0.3 L7.5 0.3 L9.7 2.3 L9.7 5.3 L7.8 6.3 L8.3 7.5 L7.3 8.5 L8.3 9.5 L7.3 10.5 L8.3 11.5 L6.5 13.5 L4.5 14.5 L3 13.5 L3 6.3 L1 5.3 L1 2.3 Z" fill="#f2a012"/>
<path d="M9.7 2.3 L9.7 5.3 L7.8 6.3 L8.3 7.5 L7.3 8.5 L8.3 9.5 L7.3 10.5 L8.3 11.5 L6.5 13.5 L4.5 14.5" fill="none" stroke="#0a0600" stroke-width="1.2"/>
<path d="M2.2 1.5 L7 1.5" stroke="#ffe0a0" stroke-width="0.9"/>
<circle cx="5.3" cy="3.8" r="0.9" fill="#0a0600"/>
</svg>
<div class="t" style="left:1152.87px;top:81px;font-size:11px;line-height:13px;color:#0e0d0c;font-weight:normal;letter-spacing:0.939px;">kisseloff</div>
<div class="t" style="left:1346.65px;top:81px;font-size:11px;line-height:13px;color:#0e0d0c;font-weight:normal;letter-spacing:0.891px;">347.58</div>
<div class="t" style="left:1389.75px;top:81px;font-size:11px;line-height:13px;color:#0e0d0c;font-weight:normal;letter-spacing:1.099px;">ГиБ</div>
<div style="position:absolute;left:1126px;top:95px;width:288px;height:16px;background:#f5f5f3"></div>
<svg style="position:absolute;left:1131px;top:95px" width="14" height="16" viewBox="0 0 14 16">
<defs><linearGradient id="gm" x1="0" y1="0" x2="1" y2="1"><stop offset="0" stop-color="#b0ecff"/><stop offset="0.35" stop-color="#4cc0ff"/><stop offset="1" stop-color="#0048d8"/></linearGradient></defs>
<path d="M1 1.5 L11.8 0.5 L12.8 9.8 L3.2 11.8 Z" fill="#e4e4f4" stroke="#8a7a90" stroke-width="0.9"/>
<path d="M2.4 2.6 L10.9 1.8 L11.6 9 L3.9 10.6 Z" fill="url(#gm)"/>
<path d="M3.5 12.2 L12.8 10.5 L11.5 14.2 L2.2 15.5 Z" fill="#c4c4f0" stroke="#6a6a9a" stroke-width="0.8"/>
</svg><svg style="position:absolute;left:1129px;top:97px" width="11" height="15" viewBox="0 0 11 15">
<path d="M2.5 0.3 L7.5 0.3 L9.7 2.3 L9.7 5.3 L7.8 6.3 L8.3 7.5 L7.3 8.5 L8.3 9.5 L7.3 10.5 L8.3 11.5 L6.5 13.5 L4.5 14.5 L3 13.5 L3 6.3 L1 5.3 L1 2.3 Z" fill="#f2a012"/>
<path d="M9.7 2.3 L9.7 5.3 L7.8 6.3 L8.3 7.5 L7.3 8.5 L8.3 9.5 L7.3 10.5 L8.3 11.5 L6.5 13.5 L4.5 14.5" fill="none" stroke="#0a0600" stroke-width="1.2"/>
<path d="M2.2 1.5 L7 1.5" stroke="#ffe0a0" stroke-width="0.9"/>
<circle cx="5.3" cy="3.8" r="0.9" fill="#0a0600"/>
</svg>
<div class="t" style="left:1152.60px;top:97px;font-size:11px;line-height:13px;color:#0e0d0c;font-weight:normal;letter-spacing:0.393px;">Jaguar</div>
<div class="t" style="left:1346.71px;top:97px;font-size:11px;line-height:13px;color:#0e0d0c;font-weight:normal;letter-spacing:1.029px;">112.38</div>
<div class="t" style="left:1389.75px;top:97px;font-size:11px;line-height:13px;color:#0e0d0c;font-weight:normal;letter-spacing:1.099px;">ГиБ</div>
<svg style="position:absolute;left:1131px;top:111px" width="14" height="16" viewBox="0 0 14 16">
<defs><linearGradient id="gm" x1="0" y1="0" x2="1" y2="1"><stop offset="0" stop-color="#b0ecff"/><stop offset="0.35" stop-color="#4cc0ff"/><stop offset="1" stop-color="#0048d8"/></linearGradient></defs>
<path d="M1 1.5 L11.8 0.5 L12.8 9.8 L3.2 11.8 Z" fill="#e4e4f4" stroke="#8a7a90" stroke-width="0.9"/>
<path d="M2.4 2.6 L10.9 1.8 L11.6 9 L3.9 10.6 Z" fill="url(#gm)"/>
<path d="M3.5 12.2 L12.8 10.5 L11.5 14.2 L2.2 15.5 Z" fill="#c4c4f0" stroke="#6a6a9a" stroke-width="0.8"/>
</svg><svg style="position:absolute;left:1132px;top:123px" width="12" height="5" viewBox="0 0 12 5">
<rect x="0" y="0" width="12" height="5" fill="#2a1a10"/>
<path d="M1 1.2h2.5M5 1.2h2.5M9 1.2h2.5M0 3.6h1.8M3.3 3.6h2.5M7.3 3.6h2.5" stroke="#ff6a1a" stroke-width="1.1"/>
</svg><svg style="position:absolute;left:1129px;top:113px" width="11" height="15" viewBox="0 0 11 15">
<path d="M2.5 0.3 L7.5 0.3 L9.7 2.3 L9.7 5.3 L7.8 6.3 L8.3 7.5 L7.3 8.5 L8.3 9.5 L7.3 10.5 L8.3 11.5 L6.5 13.5 L4.5 14.5 L3 13.5 L3 6.3 L1 5.3 L1 2.3 Z" fill="#f2a012"/>
<path d="M9.7 2.3 L9.7 5.3 L7.8 6.3 L8.3 7.5 L7.3 8.5 L8.3 9.5 L7.3 10.5 L8.3 11.5 L6.5 13.5 L4.5 14.5" fill="none" stroke="#0a0600" stroke-width="1.2"/>
<path d="M2.2 1.5 L7 1.5" stroke="#ffe0a0" stroke-width="0.9"/>
<circle cx="5.3" cy="3.8" r="0.9" fill="#0a0600"/>
</svg>
<div class="t" style="left:1152.70px;top:113px;font-size:11px;line-height:13px;color:#0e0d0c;font-weight:normal;letter-spacing:0.597px;">[2Lan]Dyck</div>
<div class="t" style="left:1353.65px;top:113px;font-size:11px;line-height:13px;color:#0e0d0c;font-weight:normal;letter-spacing:0.894px;">71.38</div>
<div class="t" style="left:1389.75px;top:113px;font-size:11px;line-height:13px;color:#0e0d0c;font-weight:normal;letter-spacing:1.099px;">ГиБ</div>
<div style="position:absolute;left:1126px;top:127px;width:288px;height:16px;background:#f5f5f3"></div>
<svg style="position:absolute;left:1130px;top:129px" width="16" height="13" viewBox="0 0 16 13">
<defs><linearGradient id="gp" x1="0" y1="0" x2="0" y2="1"><stop offset="0" stop-color="#3f8ee0"/><stop offset="0.55" stop-color="#a8d4fa"/><stop offset="1" stop-color="#2c78d4"/></linearGradient></defs>
<path d="M2 4 L14 4 L14 11 Q14 11.8 13 11.8 L3 11.8 Q2 11.8 2 11 Z" fill="url(#gp)"/>
<path d="M0.3 5.5 Q0 1 3 0.8 L13 0.8 Q16 1 15.7 5.5 L13.5 5.7 L13 3.3 L3 3.3 L2.5 5.7 Z" fill="#3a86da"/>
<ellipse cx="8" cy="6.2" rx="3.2" ry="2.3" fill="#8e8a84"/><ellipse cx="8" cy="5.8" rx="2.2" ry="1.4" fill="#d8d4cc"/>
</svg><svg style="position:absolute;left:1129px;top:129px" width="11" height="15" viewBox="0 0 11 15">
<path d="M2.5 0.3 L7.5 0.3 L9.7 2.3 L9.7 5.3 L7.8 6.3 L8.3 7.5 L7.3 8.5 L8.3 9.5 L7.3 10.5 L8.3 11.5 L6.5 13.5 L4.5 14.5 L3 13.5 L3 6.3 L1 5.3 L1 2.3 Z" fill="#f2a012"/>
<path d="M9.7 2.3 L9.7 5.3 L7.8 6.3 L8.3 7.5 L7.3 8.5 L8.3 9.5 L7.3 10.5 L8.3 11.5 L6.5 13.5 L4.5 14.5" fill="none" stroke="#0a0600" stroke-width="1.2"/>
<path d="M2.2 1.5 L7 1.5" stroke="#ffe0a0" stroke-width="0.9"/>
<circle cx="5.3" cy="3.8" r="0.9" fill="#0a0600"/>
</svg>
<div class="t" style="left:1152.82px;top:129px;font-size:11px;line-height:13px;color:#0e0d0c;font-weight:normal;letter-spacing:0.841px;">Newer</div>
<div class="t" style="left:1353.65px;top:129px;font-size:11px;line-height:13px;color:#0e0d0c;font-weight:normal;letter-spacing:0.894px;">64.94</div>
<div class="t" style="left:1389.75px;top:129px;font-size:11px;line-height:13px;color:#0e0d0c;font-weight:normal;letter-spacing:1.099px;">ГиБ</div>
<svg style="position:absolute;left:1131px;top:143px" width="14" height="16" viewBox="0 0 14 16">
<defs><linearGradient id="gm" x1="0" y1="0" x2="1" y2="1"><stop offset="0" stop-color="#b0ecff"/><stop offset="0.35" stop-color="#4cc0ff"/><stop offset="1" stop-color="#0048d8"/></linearGradient></defs>
<path d="M1 1.5 L11.8 0.5 L12.8 9.8 L3.2 11.8 Z" fill="#e4e4f4" stroke="#8a7a90" stroke-width="0.9"/>
<path d="M2.4 2.6 L10.9 1.8 L11.6 9 L3.9 10.6 Z" fill="url(#gm)"/>
<path d="M3.5 12.2 L12.8 10.5 L11.5 14.2 L2.2 15.5 Z" fill="#c4c4f0" stroke="#6a6a9a" stroke-width="0.8"/>
</svg><svg style="position:absolute;left:1129px;top:145px" width="11" height="15" viewBox="0 0 11 15">
<path d="M2.5 0.3 L7.5 0.3 L9.7 2.3 L9.7 5.3 L7.8 6.3 L8.3 7.5 L7.3 8.5 L8.3 9.5 L7.3 10.5 L8.3 11.5 L6.5 13.5 L4.5 14.5 L3 13.5 L3 6.3 L1 5.3 L1 2.3 Z" fill="#f2a012"/>
<path d="M9.7 2.3 L9.7 5.3 L7.8 6.3 L8.3 7.5 L7.3 8.5 L8.3 9.5 L7.3 10.5 L8.3 11.5 L6.5 13.5 L4.5 14.5" fill="none" stroke="#0a0600" stroke-width="1.2"/>
<path d="M2.2 1.5 L7 1.5" stroke="#ffe0a0" stroke-width="0.9"/>
<circle cx="5.3" cy="3.8" r="0.9" fill="#0a0600"/>
</svg>
<div class="t" style="left:1152.84px;top:145px;font-size:11px;line-height:13px;color:#0e0d0c;font-weight:normal;letter-spacing:0.873px;">Treable</div>
<div class="t" style="left:1353.65px;top:145px;font-size:11px;line-height:13px;color:#0e0d0c;font-weight:normal;letter-spacing:0.894px;">52.17</div>
<div class="t" style="left:1389.75px;top:145px;font-size:11px;line-height:13px;color:#0e0d0c;font-weight:normal;letter-spacing:1.099px;">ГиБ</div>
<div style="position:absolute;left:1126px;top:159px;width:288px;height:16px;background:#f5f5f3"></div>
<svg style="position:absolute;left:1131px;top:159px" width="14" height="16" viewBox="0 0 14 16">
<defs><linearGradient id="gm" x1="0" y1="0" x2="1" y2="1"><stop offset="0" stop-color="#b0ecff"/><stop offset="0.35" stop-color="#4cc0ff"/><stop offset="1" stop-color="#0048d8"/></linearGradient></defs>
<path d="M1 1.5 L11.8 0.5 L12.8 9.8 L3.2 11.8 Z" fill="#e4e4f4" stroke="#8a7a90" stroke-width="0.9"/>
<path d="M2.4 2.6 L10.9 1.8 L11.6 9 L3.9 10.6 Z" fill="url(#gm)"/>
<path d="M3.5 12.2 L12.8 10.5 L11.5 14.2 L2.2 15.5 Z" fill="#c4c4f0" stroke="#6a6a9a" stroke-width="0.8"/>
</svg><svg style="position:absolute;left:1132px;top:171px" width="12" height="5" viewBox="0 0 12 5">
<rect x="0" y="0" width="12" height="5" fill="#2a1a10"/>
<path d="M1 1.2h2.5M5 1.2h2.5M9 1.2h2.5M0 3.6h1.8M3.3 3.6h2.5M7.3 3.6h2.5" stroke="#ff6a1a" stroke-width="1.1"/>
</svg><svg style="position:absolute;left:1129px;top:161px" width="11" height="15" viewBox="0 0 11 15">
<path d="M2.5 0.3 L7.5 0.3 L9.7 2.3 L9.7 5.3 L7.8 6.3 L8.3 7.5 L7.3 8.5 L8.3 9.5 L7.3 10.5 L8.3 11.5 L6.5 13.5 L4.5 14.5 L3 13.5 L3 6.3 L1 5.3 L1 2.3 Z" fill="#f2a012"/>
<path d="M9.7 2.3 L9.7 5.3 L7.8 6.3 L8.3 7.5 L7.3 8.5 L8.3 9.5 L7.3 10.5 L8.3 11.5 L6.5 13.5 L4.5 14.5" fill="none" stroke="#0a0600" stroke-width="1.2"/>
<path d="M2.2 1.5 L7 1.5" stroke="#ffe0a0" stroke-width="0.9"/>
<circle cx="5.3" cy="3.8" r="0.9" fill="#0a0600"/>
</svg>
<div class="t" style="left:1152.67px;top:161px;font-size:11px;line-height:13px;color:#0e0d0c;font-weight:normal;letter-spacing:0.547px;">Ilovekill</div>
<div class="t" style="left:1353.65px;top:161px;font-size:11px;line-height:13px;color:#0e0d0c;font-weight:normal;letter-spacing:0.894px;">49.49</div>
<div class="t" style="left:1389.75px;top:161px;font-size:11px;line-height:13px;color:#0e0d0c;font-weight:normal;letter-spacing:1.099px;">ГиБ</div>
<svg style="position:absolute;left:1131px;top:175px" width="14" height="16" viewBox="0 0 14 16">
<defs><linearGradient id="gm" x1="0" y1="0" x2="1" y2="1"><stop offset="0" stop-color="#b0ecff"/><stop offset="0.35" stop-color="#4cc0ff"/><stop offset="1" stop-color="#0048d8"/></linearGradient></defs>
<path d="M1 1.5 L11.8 0.5 L12.8 9.8 L3.2 11.8 Z" fill="#e4e4f4" stroke="#8a7a90" stroke-width="0.9"/>
<path d="M2.4 2.6 L10.9 1.8 L11.6 9 L3.9 10.6 Z" fill="url(#gm)"/>
<path d="M3.5 12.2 L12.8 10.5 L11.5 14.2 L2.2 15.5 Z" fill="#c4c4f0" stroke="#6a6a9a" stroke-width="0.8"/>
</svg><svg style="position:absolute;left:1129px;top:177px" width="11" height="15" viewBox="0 0 11 15">
<path d="M2.5 0.3 L7.5 0.3 L9.7 2.3 L9.7 5.3 L7.8 6.3 L8.3 7.5 L7.3 8.5 L8.3 9.5 L7.3 10.5 L8.3 11.5 L6.5 13.5 L4.5 14.5 L3 13.5 L3 6.3 L1 5.3 L1 2.3 Z" fill="#f2a012"/>
<path d="M9.7 2.3 L9.7 5.3 L7.8 6.3 L8.3 7.5 L7.3 8.5 L8.3 9.5 L7.3 10.5 L8.3 11.5 L6.5 13.5 L4.5 14.5" fill="none" stroke="#0a0600" stroke-width="1.2"/>
<path d="M2.2 1.5 L7 1.5" stroke="#ffe0a0" stroke-width="0.9"/>
<circle cx="5.3" cy="3.8" r="0.9" fill="#0a0600"/>
</svg>
<div class="t" style="left:1152.60px;top:177px;font-size:11px;line-height:13px;color:#0e0d0c;font-weight:normal;letter-spacing:0.391px;">Misha-DeeJay</div>
<div class="t" style="left:1353.65px;top:177px;font-size:11px;line-height:13px;color:#0e0d0c;font-weight:normal;letter-spacing:0.894px;">14.64</div>
<div class="t" style="left:1389.75px;top:177px;font-size:11px;line-height:13px;color:#0e0d0c;font-weight:normal;letter-spacing:1.099px;">ГиБ</div>
<div style="position:absolute;left:1126px;top:191px;width:288px;height:16px;background:#f5f5f3"></div>
<svg style="position:absolute;left:1130px;top:193px" width="16" height="13" viewBox="0 0 16 13">
<defs><linearGradient id="gp" x1="0" y1="0" x2="0" y2="1"><stop offset="0" stop-color="#3f8ee0"/><stop offset="0.55" stop-color="#a8d4fa"/><stop offset="1" stop-color="#2c78d4"/></linearGradient></defs>
<path d="M2 4 L14 4 L14 11 Q14 11.8 13 11.8 L3 11.8 Q2 11.8 2 11 Z" fill="url(#gp)"/>
<path d="M0.3 5.5 Q0 1 3 0.8 L13 0.8 Q16 1 15.7 5.5 L13.5 5.7 L13 3.3 L3 3.3 L2.5 5.7 Z" fill="#3a86da"/>
<ellipse cx="8" cy="6.2" rx="3.2" ry="2.3" fill="#8e8a84"/><ellipse cx="8" cy="5.8" rx="2.2" ry="1.4" fill="#d8d4cc"/>
</svg><svg style="position:absolute;left:1129px;top:193px" width="11" height="15" viewBox="0 0 11 15">
<path d="M2.5 0.3 L7.5 0.3 L9.7 2.3 L9.7 5.3 L7.8 6.3 L8.3 7.5 L7.3 8.5 L8.3 9.5 L7.3 10.5 L8.3 11.5 L6.5 13.5 L4.5 14.5 L3 13.5 L3 6.3 L1 5.3 L1 2.3 Z" fill="#f2a012"/>
<path d="M9.7 2.3 L9.7 5.3 L7.8 6.3 L8.3 7.5 L7.3 8.5 L8.3 9.5 L7.3 10.5 L8.3 11.5 L6.5 13.5 L4.5 14.5" fill="none" stroke="#0a0600" stroke-width="1.2"/>
<path d="M2.2 1.5 L7 1.5" stroke="#ffe0a0" stroke-width="0.9"/>
<circle cx="5.3" cy="3.8" r="0.9" fill="#0a0600"/>
</svg>
<div class="t" style="left:1152.75px;top:193px;font-size:11px;line-height:13px;color:#0e0d0c;font-weight:normal;letter-spacing:0.700px;">VerliHub2</div>
<div class="t" style="left:1352.65px;top:193px;font-size:11px;line-height:13px;color:#0e0d0c;font-weight:normal;letter-spacing:0.894px;">525.3</div>
<div class="t" style="left:1388.74px;top:193px;font-size:11px;line-height:13px;color:#0e0d0c;font-weight:normal;letter-spacing:1.073px;">КиБ</div>
<svg style="position:absolute;left:1130px;top:209px" width="16" height="13" viewBox="0 0 16 13">
<defs><linearGradient id="gp" x1="0" y1="0" x2="0" y2="1"><stop offset="0" stop-color="#3f8ee0"/><stop offset="0.55" stop-color="#a8d4fa"/><stop offset="1" stop-color="#2c78d4"/></linearGradient></defs>
<path d="M2 4 L14 4 L14 11 Q14 11.8 13 11.8 L3 11.8 Q2 11.8 2 11 Z" fill="url(#gp)"/>
<path d="M0.3 5.5 Q0 1 3 0.8 L13 0.8 Q16 1 15.7 5.5 L13.5 5.7 L13 3.3 L3 3.3 L2.5 5.7 Z" fill="#3a86da"/>
<ellipse cx="8" cy="6.2" rx="3.2" ry="2.3" fill="#8e8a84"/><ellipse cx="8" cy="5.8" rx="2.2" ry="1.4" fill="#d8d4cc"/>
</svg><svg style="position:absolute;left:1129px;top:209px" width="11" height="15" viewBox="0 0 11 15">
<path d="M2.5 0.3 L7.5 0.3 L9.7 2.3 L9.7 5.3 L7.8 6.3 L8.3 7.5 L7.3 8.5 L8.3 9.5 L7.3 10.5 L8.3 11.5 L6.5 13.5 L4.5 14.5 L3 13.5 L3 6.3 L1 5.3 L1 2.3 Z" fill="#f2a012"/>
<path d="M9.7 2.3 L9.7 5.3 L7.8 6.3 L8.3 7.5 L7.3 8.5 L8.3 9.5 L7.3 10.5 L8.3 11.5 L6.5 13.5 L4.5 14.5" fill="none" stroke="#0a0600" stroke-width="1.2"/>
<path d="M2.2 1.5 L7 1.5" stroke="#ffe0a0" stroke-width="0.9"/>
<circle cx="5.3" cy="3.8" r="0.9" fill="#0a0600"/>
</svg>
<div class="t" style="left:1152.74px;top:209px;font-size:11px;line-height:13px;color:#0e0d0c;font-weight:normal;letter-spacing:0.680px;">OpChat</div>
<div class="t" style="left:1392.64px;top:209px;font-size:11px;line-height:13px;color:#0e0d0c;font-weight:normal;letter-spacing:0.875px;">0</div>
<div class="t" style="left:1403.59px;top:209px;font-size:11px;line-height:13px;color:#0e0d0c;font-weight:normal;letter-spacing:0.781px;">Б</div>
<div style="position:absolute;left:1126px;top:223px;width:288px;height:16px;background:#f5f5f3"></div>
<svg style="position:absolute;left:1130px;top:225px" width="16" height="13" viewBox="0 0 16 13">
<defs><linearGradient id="gp" x1="0" y1="0" x2="0" y2="1"><stop offset="0" stop-color="#3f8ee0"/><stop offset="0.55" stop-color="#a8d4fa"/><stop offset="1" stop-color="#2c78d4"/></linearGradient></defs>
<path d="M2 4 L14 4 L14 11 Q14 11.8 13 11.8 L3 11.8 Q2 11.8 2 11 Z" fill="url(#gp)"/>
<path d="M0.3 5.5 Q0 1 3 0.8 L13 0.8 Q16 1 15.7 5.5 L13.5 5.7 L13 3.3 L3 3.3 L2.5 5.7 Z" fill="#3a86da"/>
<ellipse cx="8" cy="6.2" rx="3.2" ry="2.3" fill="#8e8a84"/><ellipse cx="8" cy="5.8" rx="2.2" ry="1.4" fill="#d8d4cc"/>
</svg><svg style="position:absolute;left:1129px;top:225px" width="11" height="15" viewBox="0 0 11 15">
<path d="M2.5 0.3 L7.5 0.3 L9.7 2.3 L9.7 5.3 L7.8 6.3 L8.3 7.5 L7.3 8.5 L8.3 9.5 L7.3 10.5 L8.3 11.5 L6.5 13.5 L4.5 14.5 L3 13.5 L3 6.3 L1 5.3 L1 2.3 Z" fill="#f2a012"/>
<path d="M9.7 2.3 L9.7 5.3 L7.8 6.3 L8.3 7.5 L7.3 8.5 L8.3 9.5 L7.3 10.5 L8.3 11.5 L6.5 13.5 L4.5 14.5" fill="none" stroke="#0a0600" stroke-width="1.2"/>
<path d="M2.2 1.5 L7 1.5" stroke="#ffe0a0" stroke-width="0.9"/>
<circle cx="5.3" cy="3.8" r="0.9" fill="#0a0600"/>
</svg>
<div class="t" style="left:1152.74px;top:225px;font-size:11px;line-height:13px;color:#0e0d0c;font-weight:normal;letter-spacing:0.678px;">VerliHub</div>
<div class="t" style="left:1392.64px;top:225px;font-size:11px;line-height:13px;color:#0e0d0c;font-weight:normal;letter-spacing:0.875px;">0</div>
<div class="t" style="left:1403.59px;top:225px;font-size:11px;line-height:13px;color:#0e0d0c;font-weight:normal;letter-spacing:0.781px;">Б</div>
<svg style="position:absolute;left:1130px;top:241px" width="16" height="13" viewBox="0 0 16 13">
<defs><linearGradient id="gp" x1="0" y1="0" x2="0" y2="1"><stop offset="0" stop-color="#3f8ee0"/><stop offset="0.55" stop-color="#a8d4fa"/><stop offset="1" stop-color="#2c78d4"/></linearGradient></defs>
<path d="M2 4 L14 4 L14 11 Q14 11.8 13 11.8 L3 11.8 Q2 11.8 2 11 Z" fill="url(#gp)"/>
<path d="M0.3 5.5 Q0 1 3 0.8 L13 0.8 Q16 1 15.7 5.5 L13.5 5.7 L13 3.3 L3 3.3 L2.5 5.7 Z" fill="#3a86da"/>
<ellipse cx="8" cy="6.2" rx="3.2" ry="2.3" fill="#8e8a84"/><ellipse cx="8" cy="5.8" rx="2.2" ry="1.4" fill="#d8d4cc"/>
</svg>
<div class="t" style="left:1152.46px;top:241px;font-size:11px;line-height:13px;color:#0e0d0c;font-weight:normal;letter-spacing:0.125px;">DAS</div>
<div class="t" style="left:1353.65px;top:241px;font-size:11px;line-height:13px;color:#0e0d0c;font-weight:normal;letter-spacing:0.894px;">5.893</div>
<div class="t" style="left:1389.60px;top:241px;font-size:11px;line-height:13px;color:#0e0d0c;font-weight:normal;letter-spacing:0.797px;">ТиБ</div>
<div style="position:absolute;left:1126px;top:255px;width:288px;height:16px;background:#f5f5f3"></div>
<svg style="position:absolute;left:1131px;top:255px" width="14" height="16" viewBox="0 0 14 16">
<defs><linearGradient id="gm" x1="0" y1="0" x2="1" y2="1"><stop offset="0" stop-color="#b0ecff"/><stop offset="0.35" stop-color="#4cc0ff"/><stop offset="1" stop-color="#0048d8"/></linearGradient></defs>
<path d="M1 1.5 L11.8 0.5 L12.8 9.8 L3.2 11.8 Z" fill="#e4e4f4" stroke="#8a7a90" stroke-width="0.9"/>
<path d="M2.4 2.6 L10.9 1.8 L11.6 9 L3.9 10.6 Z" fill="url(#gm)"/>
<path d="M3.5 12.2 L12.8 10.5 L11.5 14.2 L2.2 15.5 Z" fill="#c4c4f0" stroke="#6a6a9a" stroke-width="0.8"/>
</svg>
<div class="t" style="left:1152.61px;top:257px;font-size:11px;line-height:13px;color:#0e0d0c;font-weight:normal;letter-spacing:0.428px;">SVD13</div>
<div class="t" style="left:1353.73px;top:257px;font-size:11px;line-height:13px;color:#0e0d0c;font-weight:normal;letter-spacing:1.056px;">5.511</div>
<div class="t" style="left:1389.60px;top:257px;font-size:11px;line-height:13px;color:#0e0d0c;font-weight:normal;letter-spacing:0.797px;">ТиБ</div>
<svg style="position:absolute;left:1130px;top:273px" width="16" height="13" viewBox="0 0 16 13">
<defs><linearGradient id="gp" x1="0" y1="0" x2="0" y2="1"><stop offset="0" stop-color="#3f8ee0"/><stop offset="0.55" stop-color="#a8d4fa"/><stop offset="1" stop-color="#2c78d4"/></linearGradient></defs>
<path d="M2 4 L14 4 L14 11 Q14 11.8 13 11.8 L3 11.8 Q2 11.8 2 11 Z" fill="url(#gp)"/>
<path d="M0.3 5.5 Q0 1 3 0.8 L13 0.8 Q16 1 15.7 5.5 L13.5 5.7 L13 3.3 L3 3.3 L2.5 5.7 Z" fill="#3a86da"/>
<ellipse cx="8" cy="6.2" rx="3.2" ry="2.3" fill="#8e8a84"/><ellipse cx="8" cy="5.8" rx="2.2" ry="1.4" fill="#d8d4cc"/>
</svg>
<div class="t" style="left:1152.93px;top:273px;font-size:11px;line-height:13px;color:#0e0d0c;font-weight:normal;letter-spacing:1.061px;">Странник1</div>
<div class="t" style="left:1353.65px;top:273px;font-size:11px;line-height:13px;color:#0e0d0c;font-weight:normal;letter-spacing:0.894px;">5.475</div>
<div class="t" style="left:1389.60px;top:273px;font-size:11px;line-height:13px;color:#0e0d0c;font-weight:normal;letter-spacing:0.797px;">ТиБ</div>
<div style="position:absolute;left:1126px;top:287px;width:288px;height:16px;background:#f5f5f3"></div>
<svg style="position:absolute;left:1130px;top:289px" width="16" height="13" viewBox="0 0 16 13">
<defs><linearGradient id="gp" x1="0" y1="0" x2="0" y2="1"><stop offset="0" stop-color="#3f8ee0"/><stop offset="0.55" stop-color="#a8d4fa"/><stop offset="1" stop-color="#2c78d4"/></linearGradient></defs>
<path d="M2 4 L14 4 L14 11 Q14 11.8 13 11.8 L3 11.8 Q2 11.8 2 11 Z" fill="url(#gp)"/>
<path d="M0.3 5.5 Q0 1 3 0.8 L13 0.8 Q16 1 15.7 5.5 L13.5 5.7 L13 3.3 L3 3.3 L2.5 5.7 Z" fill="#3a86da"/>
<ellipse cx="8" cy="6.2" rx="3.2" ry="2.3" fill="#8e8a84"/><ellipse cx="8" cy="5.8" rx="2.2" ry="1.4" fill="#d8d4cc"/>
</svg>
<div class="t" style="left:1152.97px;top:289px;font-size:11px;line-height:13px;color:#0e0d0c;font-weight:normal;letter-spacing:1.134px;">Радонеж</div>
<div class="t" style="left:1353.65px;top:289px;font-size:11px;line-height:13px;color:#0e0d0c;font-weight:normal;letter-spacing:0.894px;">5.410</div>
<div class="t" style="left:1389.60px;top:289px;font-size:11px;line-height:13px;color:#0e0d0c;font-weight:normal;letter-spacing:0.797px;">ТиБ</div>
<svg style="position:absolute;left:1130px;top:305px" width="16" height="13" viewBox="0 0 16 13">
<defs><linearGradient id="gp" x1="0" y1="0" x2="0" y2="1"><stop offset="0" stop-color="#3f8ee0"/><stop offset="0.55" stop-color="#a8d4fa"/><stop offset="1" stop-color="#2c78d4"/></linearGradient></defs>
<path d="M2 4 L14 4 L14 11 Q14 11.8 13 11.8 L3 11.8 Q2 11.8 2 11 Z" fill="url(#gp)"/>
<path d="M0.3 5.5 Q0 1 3 0.8 L13 0.8 Q16 1 15.7 5.5 L13.5 5.7 L13 3.3 L3 3.3 L2.5 5.7 Z" fill="#3a86da"/>
<ellipse cx="8" cy="6.2" rx="3.2" ry="2.3" fill="#8e8a84"/><ellipse cx="8" cy="5.8" rx="2.2" ry="1.4" fill="#d8d4cc"/>
</svg>
<div class="t" style="left:1152.96px;top:305px;font-size:11px;line-height:13px;color:#0e0d0c;font-weight:normal;letter-spacing:1.119px;">Библиотека</div>
<div class="t" style="left:1353.65px;top:305px;font-size:11px;line-height:13px;color:#0e0d0c;font-weight:normal;letter-spacing:0.894px;">5.232</div>
<div class="t" style="left:1389.60px;top:305px;font-size:11px;line-height:13px;color:#0e0d0c;font-weight:normal;letter-spacing:0.797px;">ТиБ</div>
<div style="position:absolute;left:1127px;top:319px;width:287px;height:16px;background:linear-gradient(#b7dcf5,#9fd0f0);border:1px solid #8fc4ea;border-radius:3px;box-sizing:border-box"></div>
<svg style="position:absolute;left:1131px;top:319px" width="14" height="16" viewBox="0 0 14 16">
<defs><linearGradient id="gm" x1="0" y1="0" x2="1" y2="1"><stop offset="0" stop-color="#b0ecff"/><stop offset="0.35" stop-color="#4cc0ff"/><stop offset="1" stop-color="#0048d8"/></linearGradient></defs>
<path d="M1 1.5 L11.8 0.5 L12.8 9.8 L3.2 11.8 Z" fill="#e4e4f4" stroke="#8a7a90" stroke-width="0.9"/>
<path d="M2.4 2.6 L10.9 1.8 L11.6 9 L3.9 10.6 Z" fill="url(#gm)"/>
<path d="M3.5 12.2 L12.8 10.5 L11.5 14.2 L2.2 15.5 Z" fill="#c4c4f0" stroke="#6a6a9a" stroke-width="0.8"/>
</svg>
<div class="t" style="left:1152.66px;top:321px;font-size:11px;line-height:13px;color:#ffffff;font-weight:normal;letter-spacing:0.525px;">VuzDorf</div>
<div class="t" style="left:1353.65px;top:321px;font-size:11px;line-height:13px;color:#ffffff;font-weight:normal;letter-spacing:0.894px;">5.033</div>
<div class="t" style="left:1389.60px;top:321px;font-size:11px;line-height:13px;color:#ffffff;font-weight:normal;letter-spacing:0.797px;">ТиБ</div>
<svg style="position:absolute;left:1131px;top:335px" width="14" height="16" viewBox="0 0 14 16">
<defs><linearGradient id="gm" x1="0" y1="0" x2="1" y2="1"><stop offset="0" stop-color="#b0ecff"/><stop offset="0.35" stop-color="#4cc0ff"/><stop offset="1" stop-color="#0048d8"/></linearGradient></defs>
<path d="M1 1.5 L11.8 0.5 L12.8 9.8 L3.2 11.8 Z" fill="#e4e4f4" stroke="#8a7a90" stroke-width="0.9"/>
<path d="M2.4 2.6 L10.9 1.8 L11.6 9 L3.9 10.6 Z" fill="url(#gm)"/>
<path d="M3.5 12.2 L12.8 10.5 L11.5 14.2 L2.2 15.5 Z" fill="#c4c4f0" stroke="#6a6a9a" stroke-width="0.8"/>
</svg>
<div class="t" style="left:1152.89px;top:337px;font-size:11px;line-height:13px;color:#0e0d0c;font-weight:normal;letter-spacing:0.987px;">inm148</div>
<div class="t" style="left:1353.65px;top:337px;font-size:11px;line-height:13px;color:#0e0d0c;font-weight:normal;letter-spacing:0.894px;">4.865</div>
<div class="t" style="left:1389.60px;top:337px;font-size:11px;line-height:13px;color:#0e0d0c;font-weight:normal;letter-spacing:0.797px;">ТиБ</div>
<div style="position:absolute;left:1126px;top:351px;width:288px;height:16px;background:#f5f5f3"></div>
<svg style="position:absolute;left:1130px;top:353px" width="16" height="13" viewBox="0 0 16 13">
<defs><linearGradient id="gp" x1="0" y1="0" x2="0" y2="1"><stop offset="0" stop-color="#3f8ee0"/><stop offset="0.55" stop-color="#a8d4fa"/><stop offset="1" stop-color="#2c78d4"/></linearGradient></defs>
<path d="M2 4 L14 4 L14 11 Q14 11.8 13 11.8 L3 11.8 Q2 11.8 2 11 Z" fill="url(#gp)"/>
<path d="M0.3 5.5 Q0 1 3 0.8 L13 0.8 Q16 1 15.7 5.5 L13.5 5.7 L13 3.3 L3 3.3 L2.5 5.7 Z" fill="#3a86da"/>
<ellipse cx="8" cy="6.2" rx="3.2" ry="2.3" fill="#8e8a84"/><ellipse cx="8" cy="5.8" rx="2.2" ry="1.4" fill="#d8d4cc"/>
</svg>
<div class="t" style="left:1152.87px;top:353px;font-size:11px;line-height:13px;color:#0e0d0c;font-weight:normal;letter-spacing:0.939px;">Stas1214</div>
<div class="t" style="left:1353.65px;top:353px;font-size:11px;line-height:13px;color:#0e0d0c;font-weight:normal;letter-spacing:0.894px;">4.780</div>
<div class="t" style="left:1389.60px;top:353px;font-size:11px;line-height:13px;color:#0e0d0c;font-weight:normal;letter-spacing:0.797px;">ТиБ</div>
<svg style="position:absolute;left:1131px;top:367px" width="14" height="16" viewBox="0 0 14 16">
<defs><linearGradient id="gm" x1="0" y1="0" x2="1" y2="1"><stop offset="0" stop-color="#b0ecff"/><stop offset="0.35" stop-color="#4cc0ff"/><stop offset="1" stop-color="#0048d8"/></linearGradient></defs>
<path d="M1 1.5 L11.8 0.5 L12.8 9.8 L3.2 11.8 Z" fill="#e4e4f4" stroke="#8a7a90" stroke-width="0.9"/>
<path d="M2.4 2.6 L10.9 1.8 L11.6 9 L3.9 10.6 Z" fill="url(#gm)"/>
<path d="M3.5 12.2 L12.8 10.5 L11.5 14.2 L2.2 15.5 Z" fill="#c4c4f0" stroke="#6a6a9a" stroke-width="0.8"/>
</svg>
<div class="t" style="left:1152.73px;top:369px;font-size:11px;line-height:13px;color:#0e0d0c;font-weight:normal;letter-spacing:0.661px;">Vlad102</div>
<div class="t" style="left:1353.65px;top:369px;font-size:11px;line-height:13px;color:#0e0d0c;font-weight:normal;letter-spacing:0.894px;">4.427</div>
<div class="t" style="left:1389.60px;top:369px;font-size:11px;line-height:13px;color:#0e0d0c;font-weight:normal;letter-spacing:0.797px;">ТиБ</div>
<div style="position:absolute;left:1126px;top:383px;width:288px;height:16px;background:#f5f5f3"></div>
<svg style="position:absolute;left:1131px;top:383px" width="14" height="16" viewBox="0 0 14 16">
<defs><linearGradient id="gm" x1="0" y1="0" x2="1" y2="1"><stop offset="0" stop-color="#b0ecff"/><stop offset="0.35" stop-color="#4cc0ff"/><stop offset="1" stop-color="#0048d8"/></linearGradient></defs>
<path d="M1 1.5 L11.8 0.5 L12.8 9.8 L3.2 11.8 Z" fill="#e4e4f4" stroke="#8a7a90" stroke-width="0.9"/>
<path d="M2.4 2.6 L10.9 1.8 L11.6 9 L3.9 10.6 Z" fill="url(#gm)"/>
<path d="M3.5 12.2 L12.8 10.5 L11.5 14.2 L2.2 15.5 Z" fill="#c4c4f0" stroke="#6a6a9a" stroke-width="0.8"/>
</svg>
<div class="t" style="left:1152.81px;top:385px;font-size:11px;line-height:13px;color:#0e0d0c;font-weight:normal;letter-spacing:0.820px;">Blackword77</div>
<div class="t" style="left:1353.65px;top:385px;font-size:11px;line-height:13px;color:#0e0d0c;font-weight:normal;letter-spacing:0.894px;">3.903</div>
<div class="t" style="left:1389.60px;top:385px;font-size:11px;line-height:13px;color:#0e0d0c;font-weight:normal;letter-spacing:0.797px;">ТиБ</div>
<svg style="position:absolute;left:1131px;top:399px" width="14" height="16" viewBox="0 0 14 16">
<defs><linearGradient id="gm" x1="0" y1="0" x2="1" y2="1"><stop offset="0" stop-color="#b0ecff"/><stop offset="0.35" stop-color="#4cc0ff"/><stop offset="1" stop-color="#0048d8"/></linearGradient></defs>
<path d="M1 1.5 L11.8 0.5 L12.8 9.8 L3.2 11.8 Z" fill="#e4e4f4" stroke="#8a7a90" stroke-width="0.9"/>
<path d="M2.4 2.6 L10.9 1.8 L11.6 9 L3.9 10.6 Z" fill="url(#gm)"/>
<path d="M3.5 12.2 L12.8 10.5 L11.5 14.2 L2.2 15.5 Z" fill="#c4c4f0" stroke="#6a6a9a" stroke-width="0.8"/>
</svg>
<div class="t" style="left:1153.01px;top:401px;font-size:11px;line-height:13px;color:#0e0d0c;font-weight:normal;letter-spacing:1.219px;">mot</div>
<div class="t" style="left:1353.65px;top:401px;font-size:11px;line-height:13px;color:#0e0d0c;font-weight:normal;letter-spacing:0.894px;">3.686</div>
<div class="t" style="left:1389.60px;top:401px;font-size:11px;line-height:13px;color:#0e0d0c;font-weight:normal;letter-spacing:0.797px;">ТиБ</div>
<div style="position:absolute;left:1126px;top:415px;width:288px;height:16px;background:#f5f5f3"></div>
<svg style="position:absolute;left:1130px;top:417px" width="16" height="13" viewBox="0 0 16 13">
<defs><linearGradient id="gp" x1="0" y1="0" x2="0" y2="1"><stop offset="0" stop-color="#3f8ee0"/><stop offset="0.55" stop-color="#a8d4fa"/><stop offset="1" stop-color="#2c78d4"/></linearGradient></defs>
<path d="M2 4 L14 4 L14 11 Q14 11.8 13 11.8 L3 11.8 Q2 11.8 2 11 Z" fill="url(#gp)"/>
<path d="M0.3 5.5 Q0 1 3 0.8 L13 0.8 Q16 1 15.7 5.5 L13.5 5.7 L13 3.3 L3 3.3 L2.5 5.7 Z" fill="#3a86da"/>
<ellipse cx="8" cy="6.2" rx="3.2" ry="2.3" fill="#8e8a84"/><ellipse cx="8" cy="5.8" rx="2.2" ry="1.4" fill="#d8d4cc"/>
</svg>
<div class="t" style="left:1152.86px;top:417px;font-size:11px;line-height:13px;color:#0e0d0c;font-weight:normal;letter-spacing:0.924px;">ruscatdownload</div>
<div class="t" style="left:1353.65px;top:417px;font-size:11px;line-height:13px;color:#0e0d0c;font-weight:normal;letter-spacing:0.894px;">3.363</div>
<div class="t" style="left:1389.60px;top:417px;font-size:11px;line-height:13px;color:#0e0d0c;font-weight:normal;letter-spacing:0.797px;">ТиБ</div>
<svg style="position:absolute;left:1131px;top:431px" width="14" height="16" viewBox="0 0 14 16">
<defs><linearGradient id="gm" x1="0" y1="0" x2="1" y2="1"><stop offset="0" stop-color="#b0ecff"/><stop offset="0.35" stop-color="#4cc0ff"/><stop offset="1" stop-color="#0048d8"/></linearGradient></defs>
<path d="M1 1.5 L11.8 0.5 L12.8 9.8 L3.2 11.8 Z" fill="#e4e4f4" stroke="#8a7a90" stroke-width="0.9"/>
<path d="M2.4 2.6 L10.9 1.8 L11.6 9 L3.9 10.6 Z" fill="url(#gm)"/>
<path d="M3.5 12.2 L12.8 10.5 L11.5 14.2 L2.2 15.5 Z" fill="#c4c4f0" stroke="#6a6a9a" stroke-width="0.8"/>
</svg>
<div class="t" style="left:1152.77px;top:433px;font-size:11px;line-height:13px;color:#0e0d0c;font-weight:normal;letter-spacing:0.732px;">[AirNet]Spirit</div>
<div class="t" style="left:1353.65px;top:433px;font-size:11px;line-height:13px;color:#0e0d0c;font-weight:normal;letter-spacing:0.894px;">3.209</div>
<div class="t" style="left:1389.60px;top:433px;font-size:11px;line-height:13px;color:#0e0d0c;font-weight:normal;letter-spacing:0.797px;">ТиБ</div>
<div style="position:absolute;left:1126px;top:447px;width:288px;height:16px;background:#f5f5f3"></div>
<svg style="position:absolute;left:1131px;top:447px" width="14" height="16" viewBox="0 0 14 16">
<defs><linearGradient id="gm" x1="0" y1="0" x2="1" y2="1"><stop offset="0" stop-color="#b0ecff"/><stop offset="0.35" stop-color="#4cc0ff"/><stop offset="1" stop-color="#0048d8"/></linearGradient></defs>
<path d="M1 1.5 L11.8 0.5 L12.8 9.8 L3.2 11.8 Z" fill="#e4e4f4" stroke="#8a7a90" stroke-width="0.9"/>
<path d="M2.4 2.6 L10.9 1.8 L11.6 9 L3.9 10.6 Z" fill="url(#gm)"/>
<path d="M3.5 12.2 L12.8 10.5 L11.5 14.2 L2.2 15.5 Z" fill="#c4c4f0" stroke="#6a6a9a" stroke-width="0.8"/>
</svg>
<div class="t" style="left:1152.63px;top:449px;font-size:11px;line-height:13px;color:#0e0d0c;font-weight:normal;letter-spacing:0.458px;">AleksK</div>
<div class="t" style="left:1353.65px;top:449px;font-size:11px;line-height:13px;color:#0e0d0c;font-weight:normal;letter-spacing:0.894px;">3.068</div>
<div class="t" style="left:1389.60px;top:449px;font-size:11px;line-height:13px;color:#0e0d0c;font-weight:normal;letter-spacing:0.797px;">ТиБ</div>
<svg style="position:absolute;left:1131px;top:463px" width="14" height="16" viewBox="0 0 14 16">
<defs><linearGradient id="gm" x1="0" y1="0" x2="1" y2="1"><stop offset="0" stop-color="#b0ecff"/><stop offset="0.35" stop-color="#4cc0ff"/><stop offset="1" stop-color="#0048d8"/></linearGradient></defs>
<path d="M1 1.5 L11.8 0.5 L12.8 9.8 L3.2 11.8 Z" fill="#e4e4f4" stroke="#8a7a90" stroke-width="0.9"/>
<path d="M2.4 2.6 L10.9 1.8 L11.6 9 L3.9 10.6 Z" fill="url(#gm)"/>
<path d="M3.5 12.2 L12.8 10.5 L11.5 14.2 L2.2 15.5 Z" fill="#c4c4f0" stroke="#6a6a9a" stroke-width="0.8"/>
</svg>
<div class="t" style="left:1152.85px;top:465px;font-size:11px;line-height:13px;color:#0e0d0c;font-weight:normal;letter-spacing:0.894px;">voran</div>
<div class="t" style="left:1353.65px;top:465px;font-size:11px;line-height:13px;color:#0e0d0c;font-weight:normal;letter-spacing:0.894px;">2.798</div>
<div class="t" style="left:1389.60px;top:465px;font-size:11px;line-height:13px;color:#0e0d0c;font-weight:normal;letter-spacing:0.797px;">ТиБ</div>
<div style="position:absolute;left:1126px;top:479px;width:288px;height:16px;background:#f5f5f3"></div>
<svg style="position:absolute;left:1131px;top:479px" width="14" height="16" viewBox="0 0 14 16">
<defs><linearGradient id="gm" x1="0" y1="0" x2="1" y2="1"><stop offset="0" stop-color="#b0ecff"/><stop offset="0.35" stop-color="#4cc0ff"/><stop offset="1" stop-color="#0048d8"/></linearGradient></defs>
<path d="M1 1.5 L11.8 0.5 L12.8 9.8 L3.2 11.8 Z" fill="#e4e4f4" stroke="#8a7a90" stroke-width="0.9"/>
<path d="M2.4 2.6 L10.9 1.8 L11.6 9 L3.9 10.6 Z" fill="url(#gm)"/>
<path d="M3.5 12.2 L12.8 10.5 L11.5 14.2 L2.2 15.5 Z" fill="#c4c4f0" stroke="#6a6a9a" stroke-width="0.8"/>
</svg>
<div class="t" style="left:1152.90px;top:481px;font-size:11px;line-height:13px;color:#0e0d0c;font-weight:normal;letter-spacing:0.990px;">Kostroma</div>
<div class="t" style="left:1353.65px;top:481px;font-size:11px;line-height:13px;color:#0e0d0c;font-weight:normal;letter-spacing:0.894px;">2.543</div>
<div class="t" style="left:1389.60px;top:481px;font-size:11px;line-height:13px;color:#0e0d0c;font-weight:normal;letter-spacing:0.797px;">ТиБ</div>
<svg style="position:absolute;left:1131px;top:495px" width="14" height="16" viewBox="0 0 14 16">
<defs><linearGradient id="gm" x1="0" y1="0" x2="1" y2="1"><stop offset="0" stop-color="#b0ecff"/><stop offset="0.35" stop-color="#4cc0ff"/><stop offset="1" stop-color="#0048d8"/></linearGradient></defs>
<path d="M1 1.5 L11.8 0.5 L12.8 9.8 L3.2 11.8 Z" fill="#e4e4f4" stroke="#8a7a90" stroke-width="0.9"/>
<path d="M2.4 2.6 L10.9 1.8 L11.6 9 L3.9 10.6 Z" fill="url(#gm)"/>
<path d="M3.5 12.2 L12.8 10.5 L11.5 14.2 L2.2 15.5 Z" fill="#c4c4f0" stroke="#6a6a9a" stroke-width="0.8"/>
</svg>
<div class="t" style="left:1152.91px;top:497px;font-size:11px;line-height:13px;color:#0e0d0c;font-weight:normal;letter-spacing:1.014px;">frost1984</div>
<div class="t" style="left:1353.65px;top:497px;font-size:11px;line-height:13px;color:#0e0d0c;font-weight:normal;letter-spacing:0.894px;">2.504</div>
<div class="t" style="left:1389.60px;top:497px;font-size:11px;line-height:13px;color:#0e0d0c;font-weight:normal;letter-spacing:0.797px;">ТиБ</div>
<div style="position:absolute;left:1126px;top:511px;width:288px;height:16px;background:#f5f5f3"></div>
<svg style="position:absolute;left:1131px;top:511px" width="14" height="16" viewBox="0 0 14 16">
<defs><linearGradient id="gm" x1="0" y1="0" x2="1" y2="1"><stop offset="0" stop-color="#b0ecff"/><stop offset="0.35" stop-color="#4cc0ff"/><stop offset="1" stop-color="#0048d8"/></linearGradient></defs>
<path d="M1 1.5 L11.8 0.5 L12.8 9.8 L3.2 11.8 Z" fill="#e4e4f4" stroke="#8a7a90" stroke-width="0.9"/>
<path d="M2.4 2.6 L10.9 1.8 L11.6 9 L3.9 10.6 Z" fill="url(#gm)"/>
<path d="M3.5 12.2 L12.8 10.5 L11.5 14.2 L2.2 15.5 Z" fill="#c4c4f0" stroke="#6a6a9a" stroke-width="0.8"/>
</svg>
<div class="t" style="left:1152.80px;top:513px;font-size:11px;line-height:13px;color:#0e0d0c;font-weight:normal;letter-spacing:0.795px;">TetraRen</div>
<div class="t" style="left:1353.65px;top:513px;font-size:11px;line-height:13px;color:#0e0d0c;font-weight:normal;letter-spacing:0.894px;">2.410</div>
<div class="t" style="left:1389.60px;top:513px;font-size:11px;line-height:13px;color:#0e0d0c;font-weight:normal;letter-spacing:0.797px;">ТиБ</div>
<svg style="position:absolute;left:1131px;top:527px" width="14" height="16" viewBox="0 0 14 16">
<defs><linearGradient id="gm" x1="0" y1="0" x2="1" y2="1"><stop offset="0" stop-color="#b0ecff"/><stop offset="0.35" stop-color="#4cc0ff"/><stop offset="1" stop-color="#0048d8"/></linearGradient></defs>
<path d="M1 1.5 L11.8 0.5 L12.8 9.8 L3.2 11.8 Z" fill="#e4e4f4" stroke="#8a7a90" stroke-width="0.9"/>
<path d="M2.4 2.6 L10.9 1.8 L11.6 9 L3.9 10.6 Z" fill="url(#gm)"/>
<path d="M3.5 12.2 L12.8 10.5 L11.5 14.2 L2.2 15.5 Z" fill="#c4c4f0" stroke="#6a6a9a" stroke-width="0.8"/>
</svg><svg style="position:absolute;left:1132px;top:539px" width="12" height="5" viewBox="0 0 12 5">
<rect x="0" y="0" width="12" height="5" fill="#2a1a10"/>
<path d="M1 1.2h2.5M5 1.2h2.5M9 1.2h2.5M0 3.6h1.8M3.3 3.6h2.5M7.3 3.6h2.5" stroke="#ff6a1a" stroke-width="1.1"/>
</svg>
<div class="t" style="left:1152.81px;top:529px;font-size:11px;line-height:13px;color:#0e0d0c;font-weight:normal;letter-spacing:0.824px;">Send</div>
<div class="t" style="left:1353.65px;top:529px;font-size:11px;line-height:13px;color:#0e0d0c;font-weight:normal;letter-spacing:0.894px;">2.367</div>
<div class="t" style="left:1389.60px;top:529px;font-size:11px;line-height:13px;color:#0e0d0c;font-weight:normal;letter-spacing:0.797px;">ТиБ</div>
<div style="position:absolute;left:1126px;top:543px;width:288px;height:16px;background:#f5f5f3"></div>
<svg style="position:absolute;left:1131px;top:543px" width="14" height="16" viewBox="0 0 14 16">
<defs><linearGradient id="gm" x1="0" y1="0" x2="1" y2="1"><stop offset="0" stop-color="#b0ecff"/><stop offset="0.35" stop-color="#4cc0ff"/><stop offset="1" stop-color="#0048d8"/></linearGradient></defs>
<path d="M1 1.5 L11.8 0.5 L12.8 9.8 L3.2 11.8 Z" fill="#e4e4f4" stroke="#8a7a90" stroke-width="0.9"/>
<path d="M2.4 2.6 L10.9 1.8 L11.6 9 L3.9 10.6 Z" fill="url(#gm)"/>
<path d="M3.5 12.2 L12.8 10.5 L11.5 14.2 L2.2 15.5 Z" fill="#c4c4f0" stroke="#6a6a9a" stroke-width="0.8"/>
</svg>
<div class="t" style="left:1152.43px;top:545px;font-size:11px;line-height:13px;color:#0e0d0c;font-weight:normal;letter-spacing:0.068px;">K1SLEY</div>
<div class="t" style="left:1353.65px;top:545px;font-size:11px;line-height:13px;color:#0e0d0c;font-weight:normal;letter-spacing:0.894px;">2.288</div>
<div class="t" style="left:1389.60px;top:545px;font-size:11px;line-height:13px;color:#0e0d0c;font-weight:normal;letter-spacing:0.797px;">ТиБ</div>
<svg style="position:absolute;left:1130px;top:561px" width="16" height="13" viewBox="0 0 16 13">
<defs><linearGradient id="gp" x1="0" y1="0" x2="0" y2="1"><stop offset="0" stop-color="#3f8ee0"/><stop offset="0.55" stop-color="#a8d4fa"/><stop offset="1" stop-color="#2c78d4"/></linearGradient></defs>
<path d="M2 4 L14 4 L14 11 Q14 11.8 13 11.8 L3 11.8 Q2 11.8 2 11 Z" fill="url(#gp)"/>
<path d="M0.3 5.5 Q0 1 3 0.8 L13 0.8 Q16 1 15.7 5.5 L13.5 5.7 L13 3.3 L3 3.3 L2.5 5.7 Z" fill="#3a86da"/>
<ellipse cx="8" cy="6.2" rx="3.2" ry="2.3" fill="#8e8a84"/><ellipse cx="8" cy="5.8" rx="2.2" ry="1.4" fill="#d8d4cc"/>
</svg>
<div class="t" style="left:1152.84px;top:561px;font-size:11px;line-height:13px;color:#0e0d0c;font-weight:normal;letter-spacing:0.887px;">serdolic</div>
<div class="t" style="left:1353.65px;top:561px;font-size:11px;line-height:13px;color:#0e0d0c;font-weight:normal;letter-spacing:0.894px;">2.286</div>
<div class="t" style="left:1389.60px;top:561px;font-size:11px;line-height:13px;color:#0e0d0c;font-weight:normal;letter-spacing:0.797px;">ТиБ</div>
<div style="position:absolute;left:1126px;top:575px;width:288px;height:16px;background:#f5f5f3"></div>
<svg style="position:absolute;left:1131px;top:575px" width="14" height="16" viewBox="0 0 14 16">
<defs><linearGradient id="gm" x1="0" y1="0" x2="1" y2="1"><stop offset="0" stop-color="#b0ecff"/><stop offset="0.35" stop-color="#4cc0ff"/><stop offset="1" stop-color="#0048d8"/></linearGradient></defs>
<path d="M1 1.5 L11.8 0.5 L12.8 9.8 L3.2 11.8 Z" fill="#e4e4f4" stroke="#8a7a90" stroke-width="0.9"/>
<path d="M2.4 2.6 L10.9 1.8 L11.6 9 L3.9 10.6 Z" fill="url(#gm)"/>
<path d="M3.5 12.2 L12.8 10.5 L11.5 14.2 L2.2 15.5 Z" fill="#c4c4f0" stroke="#6a6a9a" stroke-width="0.8"/>
</svg>
<div class="t" style="left:1152.78px;top:577px;font-size:11px;line-height:13px;color:#0e0d0c;font-weight:normal;letter-spacing:0.752px;">Pocomaxa</div>
<div class="t" style="left:1353.65px;top:577px;font-size:11px;line-height:13px;color:#0e0d0c;font-weight:normal;letter-spacing:0.894px;">2.271</div>
<div class="t" style="left:1389.60px;top:577px;font-size:11px;line-height:13px;color:#0e0d0c;font-weight:normal;letter-spacing:0.797px;">ТиБ</div>
<svg style="position:absolute;left:1131px;top:591px" width="14" height="16" viewBox="0 0 14 16">
<defs><linearGradient id="gm" x1="0" y1="0" x2="1" y2="1"><stop offset="0" stop-color="#b0ecff"/><stop offset="0.35" stop-color="#4cc0ff"/><stop offset="1" stop-color="#0048d8"/></linearGradient></defs>
<path d="M1 1.5 L11.8 0.5 L12.8 9.8 L3.2 11.8 Z" fill="#e4e4f4" stroke="#8a7a90" stroke-width="0.9"/>
<path d="M2.4 2.6 L10.9 1.8 L11.6 9 L3.9 10.6 Z" fill="url(#gm)"/>
<path d="M3.5 12.2 L12.8 10.5 L11.5 14.2 L2.2 15.5 Z" fill="#c4c4f0" stroke="#6a6a9a" stroke-width="0.8"/>
</svg>
<div class="t" style="left:1152.76px;top:593px;font-size:11px;line-height:13px;color:#0e0d0c;font-weight:normal;letter-spacing:0.715px;">alexzimniy123</div>
<div class="t" style="left:1353.65px;top:593px;font-size:11px;line-height:13px;color:#0e0d0c;font-weight:normal;letter-spacing:0.894px;">2.252</div>
<div class="t" style="left:1389.60px;top:593px;font-size:11px;line-height:13px;color:#0e0d0c;font-weight:normal;letter-spacing:0.797px;">ТиБ</div>
<div style="position:absolute;left:1126px;top:607px;width:288px;height:16px;background:#f5f5f3"></div>
<svg style="position:absolute;left:1130px;top:609px" width="16" height="13" viewBox="0 0 16 13">
<defs><linearGradient id="gp" x1="0" y1="0" x2="0" y2="1"><stop offset="0" stop-color="#3f8ee0"/><stop offset="0.55" stop-color="#a8d4fa"/><stop offset="1" stop-color="#2c78d4"/></linearGradient></defs>
<path d="M2 4 L14 4 L14 11 Q14 11.8 13 11.8 L3 11.8 Q2 11.8 2 11 Z" fill="url(#gp)"/>
<path d="M0.3 5.5 Q0 1 3 0.8 L13 0.8 Q16 1 15.7 5.5 L13.5 5.7 L13 3.3 L3 3.3 L2.5 5.7 Z" fill="#3a86da"/>
<ellipse cx="8" cy="6.2" rx="3.2" ry="2.3" fill="#8e8a84"/><ellipse cx="8" cy="5.8" rx="2.2" ry="1.4" fill="#d8d4cc"/>
</svg>
<div class="t" style="left:1152.88px;top:609px;font-size:11px;line-height:13px;color:#0e0d0c;font-weight:normal;letter-spacing:0.969px;">bbgosha</div>
<div class="t" style="left:1353.65px;top:609px;font-size:11px;line-height:13px;color:#0e0d0c;font-weight:normal;letter-spacing:0.894px;">2.222</div>
<div class="t" style="left:1389.60px;top:609px;font-size:11px;line-height:13px;color:#0e0d0c;font-weight:normal;letter-spacing:0.797px;">ТиБ</div>
<svg style="position:absolute;left:1131px;top:623px" width="14" height="16" viewBox="0 0 14 16">
<defs><linearGradient id="gm" x1="0" y1="0" x2="1" y2="1"><stop offset="0" stop-color="#b0ecff"/><stop offset="0.35" stop-color="#4cc0ff"/><stop offset="1" stop-color="#0048d8"/></linearGradient></defs>
<path d="M1 1.5 L11.8 0.5 L12.8 9.8 L3.2 11.8 Z" fill="#e4e4f4" stroke="#8a7a90" stroke-width="0.9"/>
<path d="M2.4 2.6 L10.9 1.8 L11.6 9 L3.9 10.6 Z" fill="url(#gm)"/>
<path d="M3.5 12.2 L12.8 10.5 L11.5 14.2 L2.2 15.5 Z" fill="#c4c4f0" stroke="#6a6a9a" stroke-width="0.8"/>
</svg>
<div class="t" style="left:1152.90px;top:625px;font-size:11px;line-height:13px;color:#0e0d0c;font-weight:normal;letter-spacing:1.003px;">смить</div>
<div class="t" style="left:1353.65px;top:625px;font-size:11px;line-height:13px;color:#0e0d0c;font-weight:normal;letter-spacing:0.894px;">2.183</div>
<div class="t" style="left:1389.60px;top:625px;font-size:11px;line-height:13px;color:#0e0d0c;font-weight:normal;letter-spacing:0.797px;">ТиБ</div>
<div style="position:absolute;left:1126px;top:639px;width:288px;height:12px;background:#f5f5f3"></div>
<div style="position:absolute;left:0;top:0;width:1440px;height:651px;overflow:hidden"><svg style="position:absolute;left:1131px;top:639px" width="14" height="16" viewBox="0 0 14 16">
<defs><linearGradient id="gm" x1="0" y1="0" x2="1" y2="1"><stop offset="0" stop-color="#b0ecff"/><stop offset="0.35" stop-color="#4cc0ff"/><stop offset="1" stop-color="#0048d8"/></linearGradient></defs>
<path d="M1 1.5 L11.8 0.5 L12.8 9.8 L3.2 11.8 Z" fill="#e4e4f4" stroke="#8a7a90" stroke-width="0.9"/>
<path d="M2.4 2.6 L10.9 1.8 L11.6 9 L3.9 10.6 Z" fill="url(#gm)"/>
<path d="M3.5 12.2 L12.8 10.5 L11.5 14.2 L2.2 15.5 Z" fill="#c4c4f0" stroke="#6a6a9a" stroke-width="0.8"/>
</svg></div>
<div class="t" style="left:1152.84px;top:641px;font-size:11px;line-height:13px;color:#0e0d0c;font-weight:normal;letter-spacing:0.879px;">CompServ</div>
<div class="t" style="left:1353.65px;top:641px;font-size:11px;line-height:13px;color:#0e0d0c;font-weight:normal;letter-spacing:0.894px;">2.083</div>
<div class="t" style="left:1389.60px;top:641px;font-size:11px;line-height:13px;color:#0e0d0c;font-weight:normal;letter-spacing:0.797px;">ТиБ</div>
<div style="position:absolute;left:1125px;top:652px;width:292px;height:6px;background:#d6d2d0"></div>
<div style="position:absolute;left:1125px;top:57px;width:290px;height:595px;border:1px solid #a9a5a2;border-radius:4px;box-sizing:border-box;box-shadow:0 1px 0 rgba(255,255,255,0.6)"></div>
<svg style="position:absolute;left:1420px;top:60px;" width="14" height="10" viewBox="0 0 14 10"><path d="M3 7 L7 3 L11 7" fill="none" stroke="#8a8684" stroke-width="2"/></svg>
<div style="position:absolute;left:1424px;top:86px;width:5px;height:536px;background:linear-gradient(90deg,#b5b0ad,#c9c5c2);border-radius:3px"></div>
<div style="position:absolute;left:1419px;top:72px;width:15px;height:16px;background:linear-gradient(90deg,#ddd9d7,#cfcbc8);border:1px solid #a8a3a0;border-radius:6px;box-sizing:border-box"></div>
<svg style="position:absolute;left:1420px;top:628px;" width="14" height="9" viewBox="0 0 14 9"><path d="M3 7 L7 3 L11 7" fill="none" stroke="#8a8684" stroke-width="2"/></svg>
<svg style="position:absolute;left:1420px;top:641px;" width="14" height="9" viewBox="0 0 14 9"><path d="M3 3 L7 7 L11 3" fill="none" stroke="#111" stroke-width="2.2"/></svg>
<svg style="position:absolute;left:1097px;top:662px" width="18" height="18" viewBox="0 0 18 18">
<defs><radialGradient id="smb" cx="0.4" cy="0.35" r="0.75"><stop offset="0" stop-color="#ffe98a"/><stop offset="0.55" stop-color="#f6c21c"/><stop offset="1" stop-color="#e09400"/></radialGradient></defs>
<circle cx="9" cy="9" r="8" fill="url(#smb)"/>
<ellipse cx="6.5" cy="7" rx="1" ry="1.4" fill="#5a3a00"/><ellipse cx="11.5" cy="7" rx="1" ry="1.4" fill="#5a3a00"/>
<path d="M4.5 10.5 Q9 14.5 13.5 10.5" fill="none" stroke="#7a4a00" stroke-width="1"/></svg>
<div class="t" style="left:1321.92px;top:664px;font-size:11px;line-height:13px;color:#0e0d0c;font-weight:normal;letter-spacing:1.031px;">Ник</div>
<svg style="position:absolute;left:1418px;top:665px;" width="12" height="10" viewBox="0 0 12 10"><path d="M2.5 3 L6 6.5 L9.5 3" fill="none" stroke="#111" stroke-width="2.2"/></svg>
<div class="t" style="left:6.35px;top:690px;font-size:11px;line-height:13px;color:#0e0d0c;font-weight:normal;letter-spacing:0.906px;">[18:53:10]</div>
<div class="t" style="left:68.76px;top:690px;font-size:11px;line-height:13px;color:#c0100a;font-weight:normal;letter-spacing:1.719px;">*</div>
<div class="t" style="left:78.43px;top:690px;font-size:11px;line-height:13px;color:#0e0d0c;font-weight:normal;letter-spacing:1.056px;">Подключен</div>
<div class="t" style="left:149.99px;top:690px;font-size:11px;line-height:13px;color:#0e0d0c;font-weight:normal;letter-spacing:2.188px;">к</div>
<div class="t" style="left:160.30px;top:690px;font-size:11px;line-height:13px;color:#0e0d0c;font-weight:normal;letter-spacing:0.800px;">bastion.zet</div>
<div class="t" style="left:1138.69px;top:690px;font-size:11px;line-height:13px;color:#0e0d0c;font-weight:normal;letter-spacing:0.978px;">Пользователей:</div>
<div class="t" style="left:1237.29px;top:690px;font-size:11px;line-height:13px;color:#0e0d0c;font-weight:normal;letter-spacing:0.855px;">4716</div>
<div class="t" style="left:1269.32px;top:690px;font-size:11px;line-height:13px;color:#0e0d0c;font-weight:normal;letter-spacing:1.127px;">|</div>
<div class="t" style="left:1277.32px;top:690px;font-size:11px;line-height:13px;color:#0e0d0c;font-weight:normal;letter-spacing:1.175px;">Общая</div>
<div class="t" style="left:1323.14px;top:690px;font-size:11px;line-height:13px;color:#0e0d0c;font-weight:normal;letter-spacing:1.129px;">шара:</div>
<div class="t" style="left:1362.88px;top:690px;font-size:11px;line-height:13px;color:#0e0d0c;font-weight:normal;letter-spacing:0.868px;">517.276</div>
<div class="t" style="left:1412.66px;top:690px;font-size:11px;line-height:13px;color:#0e0d0c;font-weight:normal;letter-spacing:0.772px;">ТиБ</div>
<div style="position:absolute;left:7px;top:722px;width:1407px;height:20px;background:linear-gradient(#dcd8d6,#d2ceca);border-bottom:1px solid #b3aeab;border-top-left-radius:3px;border-top-right-radius:3px"></div>
<div style="position:absolute;left:186px;top:726px;width:1px;height:12px;background:linear-gradient(#d6d2d0,#b5b0ad,#d6d2d0)"></div>
<div style="position:absolute;left:379px;top:726px;width:1px;height:12px;background:linear-gradient(#d6d2d0,#b5b0ad,#d6d2d0)"></div>
<div style="position:absolute;left:466px;top:726px;width:1px;height:12px;background:linear-gradient(#d6d2d0,#b5b0ad,#d6d2d0)"></div>
<div style="position:absolute;left:987px;top:726px;width:1px;height:12px;background:linear-gradient(#d6d2d0,#b5b0ad,#d6d2d0)"></div>
<div style="position:absolute;left:1087px;top:726px;width:1px;height:12px;background:linear-gradient(#d6d2d0,#b5b0ad,#d6d2d0)"></div>
<div style="position:absolute;left:1412px;top:726px;width:1px;height:12px;background:linear-gradient(#d6d2d0,#b5b0ad,#d6d2d0)"></div>
<div class="t" style="left:11.36px;top:727px;font-size:11px;line-height:13px;color:#0e0d0c;font-weight:normal;letter-spacing:0.925px;">Пользователи</div>
<div class="t" style="left:190.66px;top:727px;font-size:11px;line-height:13px;color:#0e0d0c;font-weight:normal;letter-spacing:0.521px;">Имя</div>
<div class="t" style="left:217.91px;top:727px;font-size:11px;line-height:13px;color:#0e0d0c;font-weight:normal;letter-spacing:1.028px;">файла</div>
<div class="t" style="left:384.33px;top:727px;font-size:11px;line-height:13px;color:#0e0d0c;font-weight:normal;letter-spacing:1.061px;">Скорость</div>
<svg style="position:absolute;left:451px;top:729px;" width="12" height="8" viewBox="0 0 12 8"><path d="M3 6 L6 3 L9 6" fill="none" stroke="#111" stroke-width="2"/></svg>
<div class="t" style="left:470.92px;top:727px;font-size:11px;line-height:13px;color:#0e0d0c;font-weight:normal;letter-spacing:1.036px;">Статус</div>
<div class="t" style="left:992.25px;top:727px;font-size:11px;line-height:13px;color:#0e0d0c;font-weight:normal;letter-spacing:0.698px;">Размер</div>
<div class="t" style="left:1092.34px;top:727px;font-size:11px;line-height:13px;color:#0e0d0c;font-weight:normal;letter-spacing:0.877px;">Осталось</div>
<svg style="position:absolute;left:32px;top:744px" width="16" height="16" viewBox="0 0 16 16">
<defs><linearGradient id="ga" x1="0" y1="0" x2="0" y2="1"><stop offset="0" stop-color="#9be39b"/><stop offset="0.5" stop-color="#3cb03c"/><stop offset="1" stop-color="#1d8a1d"/></linearGradient></defs>
<path d="M5 0.5 L11 0.5 L11 6.5 L15 6.5 L8 15.5 L1 6.5 L5 6.5 Z" fill="url(#ga)" stroke="#2a8a2a" stroke-width="0.6"/></svg><svg style="position:absolute;left:192px;top:744px" width="15" height="17" viewBox="0 0 15 17">
<path d="M1.6 0.7 L12.4 0.7 Q13.4 0.7 13.4 1.7 L13.4 11.3 L9.2 15.5 L1.6 15.5 Q0.7 15.5 0.7 14.5 L0.7 1.7 Q0.7 0.7 1.6 0.7 Z" fill="#f6f7f5" stroke="#a2a4a2" stroke-width="1"/>
<path d="M13 11.6 L10.5 12.2 L9.6 15" fill="#e8e8e8" stroke="#a2a4a2" stroke-width="0.7"/></svg><div style="position:absolute;left:469px;top:744px;width:519px;height:16px;background:linear-gradient(#55c95c,#4cc054 35%,#43b34c 60%,#4dbf55);border:1px solid #30964a;border-radius:3px;box-sizing:border-box"></div>
<div class="t" style="left:55.11px;top:746px;font-size:11px;line-height:13px;color:#0e0d0c;font-weight:normal;letter-spacing:0.428px;">SVD13</div>
<div class="t" style="left:213.15px;top:746px;font-size:11px;line-height:13px;color:#0e0d0c;font-weight:normal;letter-spacing:0.898px;">Список</div>
<div class="t" style="left:259.21px;top:746px;font-size:11px;line-height:13px;color:#0e0d0c;font-weight:normal;letter-spacing:1.029px;">файлов</div>
<div class="t" style="left:437.04px;top:746px;font-size:11px;line-height:13px;color:#0e0d0c;font-weight:normal;letter-spacing:0.875px;">0</div>
<div class="t" style="left:447.97px;top:746px;font-size:11px;line-height:13px;color:#0e0d0c;font-weight:normal;letter-spacing:0.740px;">Б/с</div>
<div class="t" style="left:667.09px;top:746px;font-size:11px;line-height:13px;color:#ffffff;font-weight:normal;letter-spacing:1.189px;">Загрузка</div>
<div class="t" style="left:725.04px;top:746px;font-size:11px;line-height:13px;color:#ffffff;font-weight:normal;letter-spacing:1.082px;">завершена</div>
<div class="t" style="left:1027.65px;top:746px;font-size:11px;line-height:13px;color:#0e0d0c;font-weight:normal;letter-spacing:0.894px;">845.2</div>
<div class="t" style="left:1063.74px;top:746px;font-size:11px;line-height:13px;color:#0e0d0c;font-weight:normal;letter-spacing:1.073px;">КиБ</div>
<div class="t" style="left:1092.24px;top:746px;font-size:11px;line-height:13px;color:#0e0d0c;font-weight:normal;letter-spacing:0.684px;">00:00:00</div>
<div style="position:absolute;left:7px;top:761px;width:1407px;height:18px;background:#f5f5f3"></div>
<svg style="position:absolute;left:32px;top:762px" width="16" height="16" viewBox="0 0 16 16">
<defs><linearGradient id="ga" x1="0" y1="0" x2="0" y2="1"><stop offset="0" stop-color="#9be39b"/><stop offset="0.5" stop-color="#3cb03c"/><stop offset="1" stop-color="#1d8a1d"/></linearGradient></defs>
<path d="M5 0.5 L11 0.5 L11 6.5 L15 6.5 L8 15.5 L1 6.5 L5 6.5 Z" fill="url(#ga)" stroke="#2a8a2a" stroke-width="0.6"/></svg><svg style="position:absolute;left:192px;top:762px" width="15" height="17" viewBox="0 0 15 17">
<path d="M1.6 0.7 L12.4 0.7 Q13.4 0.7 13.4 1.7 L13.4 11.3 L9.2 15.5 L1.6 15.5 Q0.7 15.5 0.7 14.5 L0.7 1.7 Q0.7 0.7 1.6 0.7 Z" fill="#f6f7f5" stroke="#a2a4a2" stroke-width="1"/>
<path d="M13 11.6 L10.5 12.2 L9.6 15" fill="#e8e8e8" stroke="#a2a4a2" stroke-width="0.7"/></svg><div style="position:absolute;left:469px;top:762px;width:519px;height:16px;background:linear-gradient(#55c95c,#4cc054 35%,#43b34c 60%,#4dbf55);border:1px solid #30964a;border-radius:3px;box-sizing:border-box"></div>
<div class="t" style="left:55.43px;top:764px;font-size:11px;line-height:13px;color:#0e0d0c;font-weight:normal;letter-spacing:1.061px;">Странник1</div>
<div class="t" style="left:213.15px;top:764px;font-size:11px;line-height:13px;color:#0e0d0c;font-weight:normal;letter-spacing:0.898px;">Список</div>
<div class="t" style="left:259.21px;top:764px;font-size:11px;line-height:13px;color:#0e0d0c;font-weight:normal;letter-spacing:1.029px;">файлов</div>
<div class="t" style="left:437.04px;top:764px;font-size:11px;line-height:13px;color:#0e0d0c;font-weight:normal;letter-spacing:0.875px;">0</div>
<div class="t" style="left:447.97px;top:764px;font-size:11px;line-height:13px;color:#0e0d0c;font-weight:normal;letter-spacing:0.740px;">Б/с</div>
<div class="t" style="left:667.09px;top:764px;font-size:11px;line-height:13px;color:#ffffff;font-weight:normal;letter-spacing:1.189px;">Загрузка</div>
<div class="t" style="left:725.04px;top:764px;font-size:11px;line-height:13px;color:#ffffff;font-weight:normal;letter-spacing:1.082px;">завершена</div>
<div class="t" style="left:1040.65px;top:764px;font-size:11px;line-height:13px;color:#0e0d0c;font-weight:normal;letter-spacing:0.901px;">3.0</div>
<div class="t" style="left:1062.44px;top:764px;font-size:11px;line-height:13px;color:#0e0d0c;font-weight:normal;letter-spacing:0.490px;">МиБ</div>
<div class="t" style="left:1092.24px;top:764px;font-size:11px;line-height:13px;color:#0e0d0c;font-weight:normal;letter-spacing:0.684px;">00:00:00</div>
<svg style="position:absolute;left:32px;top:780px" width="16" height="16" viewBox="0 0 16 16">
<defs><linearGradient id="ga" x1="0" y1="0" x2="0" y2="1"><stop offset="0" stop-color="#9be39b"/><stop offset="0.5" stop-color="#3cb03c"/><stop offset="1" stop-color="#1d8a1d"/></linearGradient></defs>
<path d="M5 0.5 L11 0.5 L11 6.5 L15 6.5 L8 15.5 L1 6.5 L5 6.5 Z" fill="url(#ga)" stroke="#2a8a2a" stroke-width="0.6"/></svg><svg style="position:absolute;left:192px;top:780px" width="15" height="17" viewBox="0 0 15 17">
<path d="M1.6 0.7 L12.4 0.7 Q13.4 0.7 13.4 1.7 L13.4 11.3 L9.2 15.5 L1.6 15.5 Q0.7 15.5 0.7 14.5 L0.7 1.7 Q0.7 0.7 1.6 0.7 Z" fill="#f6f7f5" stroke="#a2a4a2" stroke-width="1"/>
<path d="M13 11.6 L10.5 12.2 L9.6 15" fill="#e8e8e8" stroke="#a2a4a2" stroke-width="0.7"/></svg><div style="position:absolute;left:469px;top:780px;width:519px;height:16px;background:linear-gradient(#55c95c,#4cc054 35%,#43b34c 60%,#4dbf55);border:1px solid #30964a;border-radius:3px;box-sizing:border-box"></div>
<div class="t" style="left:55.16px;top:782px;font-size:11px;line-height:13px;color:#0e0d0c;font-weight:normal;letter-spacing:0.525px;">VuzDorf</div>
<div class="t" style="left:213.15px;top:782px;font-size:11px;line-height:13px;color:#0e0d0c;font-weight:normal;letter-spacing:0.898px;">Список</div>
<div class="t" style="left:259.21px;top:782px;font-size:11px;line-height:13px;color:#0e0d0c;font-weight:normal;letter-spacing:1.029px;">файлов</div>
<div class="t" style="left:437.04px;top:782px;font-size:11px;line-height:13px;color:#0e0d0c;font-weight:normal;letter-spacing:0.875px;">0</div>
<div class="t" style="left:447.97px;top:782px;font-size:11px;line-height:13px;color:#0e0d0c;font-weight:normal;letter-spacing:0.740px;">Б/с</div>
<div class="t" style="left:667.09px;top:782px;font-size:11px;line-height:13px;color:#ffffff;font-weight:normal;letter-spacing:1.189px;">Загрузка</div>
<div class="t" style="left:725.04px;top:782px;font-size:11px;line-height:13px;color:#ffffff;font-weight:normal;letter-spacing:1.082px;">завершена</div>
<div class="t" style="left:1040.65px;top:782px;font-size:11px;line-height:13px;color:#0e0d0c;font-weight:normal;letter-spacing:0.901px;">1.3</div>
<div class="t" style="left:1062.44px;top:782px;font-size:11px;line-height:13px;color:#0e0d0c;font-weight:normal;letter-spacing:0.490px;">МиБ</div>
<div class="t" style="left:1092.24px;top:782px;font-size:11px;line-height:13px;color:#0e0d0c;font-weight:normal;letter-spacing:0.684px;">00:00:00</div>
<div style="position:absolute;left:7px;top:797px;width:1407px;height:18px;background:#f5f5f3"></div>
<svg style="position:absolute;left:32px;top:798px" width="16" height="16" viewBox="0 0 16 16">
<defs><linearGradient id="ga" x1="0" y1="0" x2="0" y2="1"><stop offset="0" stop-color="#9be39b"/><stop offset="0.5" stop-color="#3cb03c"/><stop offset="1" stop-color="#1d8a1d"/></linearGradient></defs>
<path d="M5 0.5 L11 0.5 L11 6.5 L15 6.5 L8 15.5 L1 6.5 L5 6.5 Z" fill="url(#ga)" stroke="#2a8a2a" stroke-width="0.6"/></svg><svg style="position:absolute;left:192px;top:798px" width="15" height="17" viewBox="0 0 15 17">
<path d="M1.6 0.7 L12.4 0.7 Q13.4 0.7 13.4 1.7 L13.4 11.3 L9.2 15.5 L1.6 15.5 Q0.7 15.5 0.7 14.5 L0.7 1.7 Q0.7 0.7 1.6 0.7 Z" fill="#f6f7f5" stroke="#a2a4a2" stroke-width="1"/>
<path d="M13 11.6 L10.5 12.2 L9.6 15" fill="#e8e8e8" stroke="#a2a4a2" stroke-width="0.7"/></svg><div style="position:absolute;left:469px;top:798px;width:519px;height:16px;background:linear-gradient(#c9c5c3,#bbb7b4);border:1px solid #a9a5a2;border-radius:3px;box-sizing:border-box"></div>
<div class="t" style="left:54.96px;top:800px;font-size:11px;line-height:13px;color:#0e0d0c;font-weight:normal;letter-spacing:0.125px;">DAS</div>
<div class="t" style="left:437.04px;top:800px;font-size:11px;line-height:13px;color:#0e0d0c;font-weight:normal;letter-spacing:0.875px;">0</div>
<div class="t" style="left:447.97px;top:800px;font-size:11px;line-height:13px;color:#0e0d0c;font-weight:normal;letter-spacing:0.740px;">Б/с</div>
<div class="t" style="left:688.51px;top:800px;font-size:11px;line-height:13px;color:#0e0d0c;font-weight:normal;letter-spacing:1.023px;">Подключение</div>
<div class="t" style="left:1067.64px;top:800px;font-size:11px;line-height:13px;color:#0e0d0c;font-weight:normal;letter-spacing:0.875px;">0</div>
<div class="t" style="left:1078.59px;top:800px;font-size:11px;line-height:13px;color:#0e0d0c;font-weight:normal;letter-spacing:0.781px;">Б</div>
<div class="t" style="left:1092.24px;top:800px;font-size:11px;line-height:13px;color:#0e0d0c;font-weight:normal;letter-spacing:0.684px;">00:00:00</div>
<svg style="position:absolute;left:32px;top:816px" width="16" height="16" viewBox="0 0 16 16">
<defs><linearGradient id="ga" x1="0" y1="0" x2="0" y2="1"><stop offset="0" stop-color="#9be39b"/><stop offset="0.5" stop-color="#3cb03c"/><stop offset="1" stop-color="#1d8a1d"/></linearGradient></defs>
<path d="M5 0.5 L11 0.5 L11 6.5 L15 6.5 L8 15.5 L1 6.5 L5 6.5 Z" fill="url(#ga)" stroke="#2a8a2a" stroke-width="0.6"/></svg><svg style="position:absolute;left:192px;top:816px" width="15" height="17" viewBox="0 0 15 17">
<path d="M1.6 0.7 L12.4 0.7 Q13.4 0.7 13.4 1.7 L13.4 11.3 L9.2 15.5 L1.6 15.5 Q0.7 15.5 0.7 14.5 L0.7 1.7 Q0.7 0.7 1.6 0.7 Z" fill="#f6f7f5" stroke="#a2a4a2" stroke-width="1"/>
<path d="M13 11.6 L10.5 12.2 L9.6 15" fill="#e8e8e8" stroke="#a2a4a2" stroke-width="0.7"/></svg><div style="position:absolute;left:469px;top:816px;width:519px;height:16px;background:linear-gradient(#c9c5c3,#bbb7b4);border:1px solid #a9a5a2;border-radius:3px;box-sizing:border-box"></div>
<div class="t" style="left:55.47px;top:818px;font-size:11px;line-height:13px;color:#0e0d0c;font-weight:normal;letter-spacing:1.134px;">Радонеж</div>
<div class="t" style="left:437.04px;top:818px;font-size:11px;line-height:13px;color:#0e0d0c;font-weight:normal;letter-spacing:0.875px;">0</div>
<div class="t" style="left:447.97px;top:818px;font-size:11px;line-height:13px;color:#0e0d0c;font-weight:normal;letter-spacing:0.740px;">Б/с</div>
<div class="t" style="left:688.51px;top:818px;font-size:11px;line-height:13px;color:#0e0d0c;font-weight:normal;letter-spacing:1.023px;">Подключение</div>
<div class="t" style="left:1067.64px;top:818px;font-size:11px;line-height:13px;color:#0e0d0c;font-weight:normal;letter-spacing:0.875px;">0</div>
<div class="t" style="left:1078.59px;top:818px;font-size:11px;line-height:13px;color:#0e0d0c;font-weight:normal;letter-spacing:0.781px;">Б</div>
<div class="t" style="left:1092.24px;top:818px;font-size:11px;line-height:13px;color:#0e0d0c;font-weight:normal;letter-spacing:0.684px;">00:00:00</div>
<div style="position:absolute;left:7px;top:833px;width:1407px;height:11px;background:#f5f5f3"></div>
<div style="position:absolute;left:0;top:0;width:1440px;height:844px;overflow:hidden"><svg style="position:absolute;left:32px;top:834px" width="16" height="16" viewBox="0 0 16 16">
<defs><linearGradient id="ga" x1="0" y1="0" x2="0" y2="1"><stop offset="0" stop-color="#9be39b"/><stop offset="0.5" stop-color="#3cb03c"/><stop offset="1" stop-color="#1d8a1d"/></linearGradient></defs>
<path d="M5 0.5 L11 0.5 L11 6.5 L15 6.5 L8 15.5 L1 6.5 L5 6.5 Z" fill="url(#ga)" stroke="#2a8a2a" stroke-width="0.6"/></svg><svg style="position:absolute;left:192px;top:834px" width="15" height="17" viewBox="0 0 15 17">
<path d="M1.6 0.7 L12.4 0.7 Q13.4 0.7 13.4 1.7 L13.4 11.3 L9.2 15.5 L1.6 15.5 Q0.7 15.5 0.7 14.5 L0.7 1.7 Q0.7 0.7 1.6 0.7 Z" fill="#f6f7f5" stroke="#a2a4a2" stroke-width="1"/>
<path d="M13 11.6 L10.5 12.2 L9.6 15" fill="#e8e8e8" stroke="#a2a4a2" stroke-width="0.7"/></svg><div style="position:absolute;left:469px;top:834px;width:519px;height:16px;background:linear-gradient(#c9c5c3,#bbb7b4);border:1px solid #a9a5a2;border-radius:3px;box-sizing:border-box"></div></div>
<div class="t" style="left:55.46px;top:836px;font-size:11px;line-height:13px;color:#0e0d0c;font-weight:normal;letter-spacing:1.119px;">Библиотека</div>
<div class="t" style="left:437.04px;top:836px;font-size:11px;line-height:13px;color:#0e0d0c;font-weight:normal;letter-spacing:0.875px;">0</div>
<div class="t" style="left:447.97px;top:836px;font-size:11px;line-height:13px;color:#0e0d0c;font-weight:normal;letter-spacing:0.740px;">Б/с</div>
<div class="t" style="left:688.51px;top:836px;font-size:11px;line-height:13px;color:#0e0d0c;font-weight:normal;letter-spacing:1.023px;">Подключение</div>
<div class="t" style="left:1067.64px;top:836px;font-size:11px;line-height:13px;color:#0e0d0c;font-weight:normal;letter-spacing:0.875px;">0</div>
<div class="t" style="left:1078.59px;top:836px;font-size:11px;line-height:13px;color:#0e0d0c;font-weight:normal;letter-spacing:0.781px;">Б</div>
<div class="t" style="left:1092.24px;top:836px;font-size:11px;line-height:13px;color:#0e0d0c;font-weight:normal;letter-spacing:0.684px;">00:00:00</div>
<div style="position:absolute;left:0px;top:845px;width:1420px;height:10px;background:#d6d2d0"></div>
<div style="position:absolute;left:6px;top:721px;width:1409px;height:124px;border:1px solid #a9a5a2;border-radius:4px;box-sizing:border-box;box-shadow:0 1px 0 rgba(255,255,255,0.6)"></div>
<svg style="position:absolute;left:1420px;top:723px;" width="14" height="10" viewBox="0 0 14 10"><path d="M3 7 L7 3 L11 7" fill="none" stroke="#8a8684" stroke-width="2"/></svg>
<div style="position:absolute;left:1424px;top:766px;width:5px;height:49px;background:linear-gradient(90deg,#b5b0ad,#c9c5c2);border-radius:3px"></div>
<div style="position:absolute;left:1419px;top:736px;width:15px;height:34px;background:linear-gradient(90deg,#ddd9d7,#cfcbc8);border:1px solid #a8a3a0;border-radius:6px;box-sizing:border-box"></div>
<svg style="position:absolute;left:1420px;top:748px;" width="14" height="10" viewBox="0 0 14 10"><path d="M4 2h6M4 4.5h6M4 7h6" stroke="#a5a09d" stroke-width="1"/></svg>
<svg style="position:absolute;left:1420px;top:820px;" width="14" height="9" viewBox="0 0 14 9"><path d="M3 7 L7 3 L11 7" fill="none" stroke="#8a8684" stroke-width="2"/></svg>
<svg style="position:absolute;left:1420px;top:834px;" width="14" height="9" viewBox="0 0 14 9"><path d="M3 3 L7 7 L11 3" fill="none" stroke="#111" stroke-width="2.2"/></svg>
<div class="t" style="left:2.23px;top:856px;font-size:11px;line-height:13px;color:#0e0d0c;font-weight:normal;letter-spacing:0.664px;">Denied</div>
<div class="t" style="left:45.17px;top:856px;font-size:11px;line-height:13px;color:#0e0d0c;font-weight:normal;letter-spacing:0.884px;">to</div>
<div class="t" style="left:60.17px;top:856px;font-size:11px;line-height:13px;color:#0e0d0c;font-weight:normal;letter-spacing:1.007px;">send</div>
<div class="t" style="left:91.89px;top:856px;font-size:11px;line-height:13px;color:#0e0d0c;font-weight:normal;letter-spacing:0.717px;">file</div>
<div class="t" style="left:112.91px;top:856px;font-size:11px;line-height:13px;color:#0e0d0c;font-weight:normal;letter-spacing:0.927px;">&#x27;/films/Supernatural/supernatural.s06e06.webdl.rus.novafilm.tv.avi&#x27;</div>
<div class="t" style="left:500.30px;top:856px;font-size:11px;line-height:13px;color:#0e0d0c;font-weight:normal;letter-spacing:0.884px;">to</div>
<div class="t" style="left:515.25px;top:856px;font-size:11px;line-height:13px;color:#0e0d0c;font-weight:normal;letter-spacing:0.915px;">desin</div>
<div class="t" style="left:549.91px;top:856px;font-size:11px;line-height:13px;color:#0e0d0c;font-weight:normal;letter-spacing:0.520px;">():</div>
<div class="t" style="left:566.11px;top:856px;font-size:11px;line-height:13px;color:#0e0d0c;font-weight:normal;letter-spacing:1.055px;">Too</div>
<div class="t" style="left:591.00px;top:856px;font-size:11px;line-height:13px;color:#0e0d0c;font-weight:normal;letter-spacing:1.040px;">small</div>
<div class="t" style="left:625.87px;top:856px;font-size:11px;line-height:13px;color:#0e0d0c;font-weight:normal;letter-spacing:1.067px;">share</div>
<div class="t" style="left:662.63px;top:856px;font-size:11px;line-height:13px;color:#0e0d0c;font-weight:normal;letter-spacing:0.884px;">to</div>
<div class="t" style="left:677.55px;top:856px;font-size:11px;line-height:13px;color:#0e0d0c;font-weight:normal;letter-spacing:0.836px;">download</div>
<div class="t" style="left:735.50px;top:856px;font-size:11px;line-height:13px;color:#0e0d0c;font-weight:normal;letter-spacing:1.222px;">from</div>
<div class="t" style="left:766.27px;top:856px;font-size:11px;line-height:13px;color:#0e0d0c;font-weight:normal;letter-spacing:1.017px;">/films:</div>
<div class="t" style="left:806.03px;top:856px;font-size:11px;line-height:13px;color:#0e0d0c;font-weight:normal;letter-spacing:0.869px;">1/20</div>
<div class="t" style="left:834.74px;top:856px;font-size:11px;line-height:13px;color:#0e0d0c;font-weight:normal;letter-spacing:0.525px;">GiB</div>
<div style="position:absolute;left:947px;top:855px;width:123px;height:18px;background:linear-gradient(#cfcbc8,#d8d4d2);border:1px solid #aaa6a3;border-radius:4px;box-sizing:border-box"></div>
<div class="t" style="left:956.31px;top:858px;font-size:11px;line-height:13px;color:#0e0d0c;font-weight:normal;letter-spacing:0.819px;">9.4</div>
<div class="t" style="left:977.79px;top:858px;font-size:11px;line-height:13px;color:#0e0d0c;font-weight:normal;letter-spacing:0.380px;">МиБ</div>
<div class="t" style="left:1005.66px;top:858px;font-size:11px;line-height:13px;color:#0e0d0c;font-weight:normal;letter-spacing:0.883px;">/</div>
<div class="t" style="left:1013.51px;top:858px;font-size:11px;line-height:13px;color:#0e0d0c;font-weight:normal;letter-spacing:0.809px;">38.1</div>
<div class="t" style="left:1042.20px;top:858px;font-size:11px;line-height:13px;color:#0e0d0c;font-weight:normal;letter-spacing:0.968px;">КиБ</div>
<div style="position:absolute;left:1077px;top:855px;width:144px;height:18px;background:linear-gradient(#cfcbc8,#d8d4d2);border:1px solid #aaa6a3;border-radius:4px;box-sizing:border-box"></div>
<div class="t" style="left:1122.13px;top:858px;font-size:11px;line-height:13px;color:#0e0d0c;font-weight:normal;letter-spacing:0.870px;">2.3</div>
<div class="t" style="left:1144.04px;top:858px;font-size:11px;line-height:13px;color:#0e0d0c;font-weight:normal;letter-spacing:0.900px;">КиБ/с</div>
<div class="t" style="left:1180.85px;top:858px;font-size:11px;line-height:13px;color:#0e0d0c;font-weight:normal;letter-spacing:0.917px;">/</div>
<div class="t" style="left:1188.77px;top:858px;font-size:11px;line-height:13px;color:#0e0d0c;font-weight:normal;letter-spacing:0.839px;">0</div>
<div class="t" style="left:1199.65px;top:858px;font-size:11px;line-height:13px;color:#0e0d0c;font-weight:normal;letter-spacing:0.708px;">Б/с</div>
<div style="position:absolute;left:1227px;top:855px;width:38px;height:18px;background:linear-gradient(#cfcbc8,#d8d4d2);border:1px solid #aaa6a3;border-radius:4px;box-sizing:border-box"></div>
<div class="t" style="left:1232.23px;top:858px;font-size:11px;line-height:13px;color:#0e0d0c;font-weight:normal;letter-spacing:0.666px;">3/1/0</div>
<div style="position:absolute;left:1273px;top:855px;width:165px;height:17px;background:linear-gradient(#c6c2bf,#b8b4b1);border:1px solid #a5a19e;border-radius:4px;box-sizing:border-box;overflow:hidden"></div>
<div style="position:absolute;left:1274px;top:856px;width:76px;height:15px;background:linear-gradient(#5ab4ee,#3d9de0);border-radius:3px 0 0 3px"></div>
<div style="position:absolute;left:1276px;top:862px;width:14px;height:2px;background:#2f86c8"></div>
<div class="t" style="left:1286.34px;top:858px;font-size:11px;line-height:13px;color:#ffffff;font-weight:bold;letter-spacing:1.075px;">Свободно</div>
<div class="t" style="left:1356.02px;top:858px;font-size:11px;line-height:13px;color:#0e0d0c;font-weight:bold;letter-spacing:1.641px;">360.36</div>
<div class="t" style="left:1403.01px;top:858px;font-size:11px;line-height:13px;color:#0e0d0c;font-weight:bold;letter-spacing:0.700px;">ГиБ</div>
<svg style="position:absolute;left:2px;top:2px" width="20" height="20" viewBox="0 0 20 20">
<defs><linearGradient id="tb2" x1="0" y1="0" x2="0" y2="1"><stop offset="0" stop-color="#f4f2f1"/><stop offset="1" stop-color="#c9c5c2"/></linearGradient></defs>
<circle cx="7.45" cy="7.45" r="6.9" fill="url(#tb2)" stroke="#8e8a88" stroke-width="0.9"/><path d="M4.3 4.3 L10.6 10.6 M10.6 4.3 L4.3 10.6" stroke="#1a1a1a" stroke-width="1.4"/></svg>
<svg style="position:absolute;left:25px;top:2px" width="20" height="20" viewBox="0 0 20 20">
<defs><linearGradient id="tb25" x1="0" y1="0" x2="0" y2="1"><stop offset="0" stop-color="#f4f2f1"/><stop offset="1" stop-color="#c9c5c2"/></linearGradient></defs>
<circle cx="7.45" cy="7.45" r="6.9" fill="url(#tb25)" stroke="#8e8a88" stroke-width="0.9"/><path d="M4.4 6.3 L7.6 9.5 L10.8 6.3" fill="none" stroke="#1a1a1a" stroke-width="1.4"/></svg>
<svg style="position:absolute;left:48px;top:2px" width="20" height="20" viewBox="0 0 20 20">
<defs><linearGradient id="tb48" x1="0" y1="0" x2="0" y2="1"><stop offset="0" stop-color="#f4f2f1"/><stop offset="1" stop-color="#c9c5c2"/></linearGradient></defs>
<circle cx="7.45" cy="7.45" r="6.9" fill="url(#tb48)" stroke="#8e8a88" stroke-width="0.9"/><path d="M7.5 4.3 L10.6 7.4 L7.5 10.5 L4.4 7.4 Z" fill="none" stroke="#1a1a1a" stroke-width="1.4"/></svg>
<svg style="position:absolute;left:1422px;top:2px" width="20" height="20" viewBox="0 0 20 20">
<defs><linearGradient id="tb1422" x1="0" y1="0" x2="0" y2="1"><stop offset="0" stop-color="#f4f2f1"/><stop offset="1" stop-color="#c9c5c2"/></linearGradient></defs>
<circle cx="7.45" cy="7.45" r="6.9" fill="url(#tb1422)" stroke="#8e8a88" stroke-width="0.9"/><circle cx="7.45" cy="7.45" r="0.7" fill="#888"/></svg>
<div class="t" style="left:302.64px;top:4px;font-size:11px;line-height:13px;color:#0e0d0c;font-weight:normal;letter-spacing:1.477px;text-shadow:0 1px 1px rgba(255,255,255,0.7)">[+]</div>
<div class="t" style="left:323.32px;top:4px;font-size:11px;line-height:13px;color:#0e0d0c;font-weight:normal;letter-spacing:0.891px;text-shadow:0 1px 1px rgba(255,255,255,0.7)">Bastion</div>
<div class="t" style="left:370.10px;top:4px;font-size:11px;line-height:13px;color:#0e0d0c;font-weight:normal;letter-spacing:0.594px;text-shadow:0 1px 1px rgba(255,255,255,0.7)">Hub</div>
<div class="t" style="left:395.93px;top:4px;font-size:11px;line-height:13px;color:#0e0d0c;font-weight:normal;letter-spacing:0.323px;text-shadow:0 1px 1px rgba(255,255,255,0.7)">-</div>
<div class="t" style="left:408.24px;top:4px;font-size:11px;line-height:13px;color:#0e0d0c;font-weight:normal;letter-spacing:0.975px;text-shadow:0 1px 1px rgba(255,255,255,0.7)">Информационно-Развлекательный</div>
<div class="t" style="left:619.93px;top:4px;font-size:11px;line-height:13px;color:#0e0d0c;font-weight:normal;letter-spacing:0.930px;text-shadow:0 1px 1px rgba(255,255,255,0.7)">Портал</div>
<div class="t" style="left:666.85px;top:4px;font-size:11px;line-height:13px;color:#0e0d0c;font-weight:normal;letter-spacing:0.891px;text-shadow:0 1px 1px rgba(255,255,255,0.7)">Bastlon</div>
<div class="t" style="left:713.74px;top:4px;font-size:11px;line-height:13px;color:#0e0d0c;font-weight:normal;letter-spacing:0.793px;text-shadow:0 1px 1px rgba(255,255,255,0.7)">Снова</div>
<div class="t" style="left:753.89px;top:4px;font-size:11px;line-height:13px;color:#0e0d0c;font-weight:normal;letter-spacing:1.211px;text-shadow:0 1px 1px rgba(255,255,255,0.7)">работает</div>
<div class="t" style="left:813.62px;top:4px;font-size:11px;line-height:13px;color:#0e0d0c;font-weight:normal;letter-spacing:0.834px;text-shadow:0 1px 1px rgba(255,255,255,0.7)">и</div>
<div class="t" style="left:824.80px;top:4px;font-size:11px;line-height:13px;color:#0e0d0c;font-weight:normal;letter-spacing:1.224px;text-shadow:0 1px 1px rgba(255,255,255,0.7)">ежедневно</div>
<div class="t" style="left:895.60px;top:4px;font-size:11px;line-height:13px;color:#0e0d0c;font-weight:normal;letter-spacing:1.018px;text-shadow:0 1px 1px rgba(255,255,255,0.7)">обновляется</div>
<div class="t" style="left:974.95px;top:4px;font-size:11px;line-height:13px;color:#0e0d0c;font-weight:normal;letter-spacing:-0.067px;text-shadow:0 1px 1px rgba(255,255,255,0.7)">!</div>
<div class="t" style="left:982.40px;top:4px;font-size:11px;line-height:13px;color:#0e0d0c;font-weight:normal;letter-spacing:0.846px;text-shadow:0 1px 1px rgba(255,255,255,0.7)">http://bastion.zet/</div>
<div class="t" style="left:1086.28px;top:4px;font-size:11px;line-height:13px;color:#0e0d0c;font-weight:normal;letter-spacing:0.893px;text-shadow:0 1px 1px rgba(255,255,255,0.7)">[192.168.181.90]</div>
<div style="position:absolute;left:2px;top:33px;width:5px;height:5px;background:#ecebea;border-radius:50%;box-shadow:0 0 1px #9a9693"></div>
<div style="position:absolute;left:88px;top:27px;width:1px;height:17px;background:linear-gradient(#d6d2d0,#aaa5a2,#d6d2d0);box-shadow:1px 0 0 #ebe9e8"></div>
<div style="position:absolute;left:158px;top:27px;width:1px;height:17px;background:linear-gradient(#d6d2d0,#aaa5a2,#d6d2d0);box-shadow:1px 0 0 #ebe9e8"></div>
<div style="position:absolute;left:227px;top:27px;width:1px;height:17px;background:linear-gradient(#d6d2d0,#aaa5a2,#d6d2d0);box-shadow:1px 0 0 #ebe9e8"></div>
<div style="position:absolute;left:358px;top:27px;width:1px;height:17px;background:linear-gradient(#d6d2d0,#aaa5a2,#d6d2d0);box-shadow:1px 0 0 #ebe9e8"></div>
<div style="position:absolute;left:489px;top:27px;width:1px;height:17px;background:linear-gradient(#d6d2d0,#aaa5a2,#d6d2d0);box-shadow:1px 0 0 #ebe9e8"></div>
<div style="position:absolute;left:589px;top:27px;width:1px;height:17px;background:linear-gradient(#d6d2d0,#aaa5a2,#d6d2d0);box-shadow:1px 0 0 #ebe9e8"></div>
<div style="position:absolute;left:720px;top:27px;width:1px;height:17px;background:linear-gradient(#d6d2d0,#aaa5a2,#d6d2d0);box-shadow:1px 0 0 #ebe9e8"></div>
<div style="position:absolute;left:363px;top:22px;width:28px;height:28px;background:linear-gradient(#bcb7b4,#c2bdba);border:1px solid #aaa5a2;border-radius:5px;box-sizing:border-box;box-shadow:inset 0 1px 2px rgba(0,0,0,0.15)"></div>
<div style="position:absolute;left:656px;top:22px;width:28px;height:28px;background:linear-gradient(#bcb7b4,#c2bdba);border:1px solid #aaa5a2;border-radius:5px;box-sizing:border-box;box-shadow:inset 0 1px 2px rgba(0,0,0,0.15)"></div>
<div style="position:absolute;left:687px;top:22px;width:28px;height:28px;background:linear-gradient(#bcb7b4,#c2bdba);border:1px solid #aaa5a2;border-radius:5px;box-sizing:border-box;box-shadow:inset 0 1px 2px rgba(0,0,0,0.15)"></div>
<svg style="position:absolute;left:12px;top:24px;" width="24" height="24" viewBox="0 0 24 24"><path d="M2.5 2.5 L17.5 2.5 Q18.5 2.5 18.5 3.5 L18.5 15.5 L12.5 21.5 L2.5 21.5 Q1.5 21.5 1.5 20.5 L1.5 3.5 Q1.5 2.5 2.5 2.5 Z" fill="#f6f6f4" stroke="#8c8c8c"/>
<path d="M18.3 15.7 L13 16.5 L12.7 21.3" fill="#e4e4e2" stroke="#9a9a9a" stroke-width="0.7"/>
<path d="M4 20 L6 15 L20 1.5 L23 4.5 L9 18 Z" fill="#f0c020" stroke="#222" stroke-width="0.8"/>
<path d="M6.5 16.5 L20.5 3" stroke="#222" stroke-width="1.6"/>
<path d="M19.5 1 L23.5 5 L22 6.5 L18 2.5 Z" fill="#d02020"/>
<path d="M4 20 L5 17 L7 19 Z" fill="#222"/></svg>
<svg style="position:absolute;left:40px;top:32px;" width="12" height="9" viewBox="0 0 12 9"><path d="M2.8 2.5 L6 5.7 L9.2 2.5" fill="none" stroke="#111" stroke-width="2.2"/></svg>
<svg style="position:absolute;left:59px;top:24px;" width="23" height="23" viewBox="0 0 23 23"><ellipse cx="11" cy="21.3" rx="8.5" ry="1.3" fill="#8a8684" opacity="0.45"/>
<path d="M1.5 2.2 L10.5 10.5" stroke="#bdbdbd" stroke-width="2"/><path d="M1.2 1.7 L3 3.4" stroke="#f4f4f4" stroke-width="1.5"/>
<path d="M2.3 20.5 L13 9.8" stroke="#1a48b8" stroke-width="4" stroke-linecap="round"/>
<path d="M3 19 L12 10.5" stroke="#5a8ae8" stroke-width="1"/>
<path d="M14 2 Q16 0.5 19.5 1.5 L21 4 L19 6.5 L16 8.5 L14 6 Z" fill="#d8d8d8" stroke="#9a9a9a" stroke-width="0.6"/>
<circle cx="15.5" cy="6.5" r="1" fill="#333"/>
<path d="M11.5 11 L20.5 20" stroke="#b81818" stroke-width="4" stroke-linecap="round"/>
<path d="M12.5 10.8 L20.8 19" stroke="#e86060" stroke-width="0.9"/></svg>
<svg style="position:absolute;left:97px;top:25px;" width="23" height="22" viewBox="0 0 23 22"><rect x="0.8" y="1.2" width="15" height="20" fill="#ece3d2" stroke="#cdbfa8" stroke-width="0.8"/>
<path d="M3 4h10M3 7h4M3 10h4M3 13h4M3 16h4M3 19h4" stroke="#b9ab92" stroke-width="0.6"/>
<defs><linearGradient id="pbx" x1="0" y1="0" x2="0" y2="1"><stop offset="0" stop-color="#5a98e8"/><stop offset="0.5" stop-color="#9ccaff"/><stop offset="1" stop-color="#4a8ae0"/></linearGradient></defs>
<rect x="5.5" y="8" width="16.5" height="12.5" rx="1" fill="url(#pbx)"/>
<ellipse cx="13.5" cy="8.5" rx="7" ry="5.5" fill="#111"/>
<ellipse cx="11.6" cy="9" rx="2.1" ry="2.3" fill="#e4e4e4"/><ellipse cx="15.4" cy="9" rx="2.1" ry="2.3" fill="#e4e4e4"/>
<ellipse cx="13.5" cy="12" rx="2" ry="1" fill="#f2c020"/>
<path d="M5.5 13 L22 13 L22 19.5 Q22 20.5 21 20.5 L6.5 20.5 Q5.5 20.5 5.5 19.5 Z" fill="url(#pbx)"/></svg>
<svg style="position:absolute;left:128px;top:25px;" width="23" height="22" viewBox="0 0 23 22"><rect x="2" y="1" width="14" height="20" fill="#eee5d4" stroke="#c9bca6" stroke-width="0.8"/>
<path d="M4 4h10M4 7h10M4 10h10M4 13h10M4 16h10" stroke="#b7a98f" stroke-width="0.6"/><defs><linearGradient id="grf" x1="0" y1="0" x2="0" y2="1"><stop offset="0" stop-color="#6ad86a"/><stop offset="0.5" stop-color="#1a8a1a"/><stop offset="1" stop-color="#5ad05a"/></linearGradient></defs>
<path d="M18 11 A5.8 5.8 0 1 0 18.5 17" fill="none" stroke="url(#grf)" stroke-width="4"/>
<path d="M14.5 7.5 L22 8 L19 14 Z" fill="#3aaa3a"/></svg>
<svg style="position:absolute;left:167px;top:26px;" width="20" height="20" viewBox="0 0 20 20"><defs><radialGradient id="glb1" cx="0.4" cy="0.35" r="0.75"><stop offset="0" stop-color="#6aa0e8"/><stop offset="0.65" stop-color="#2050b0"/><stop offset="1" stop-color="#0a2060"/></radialGradient></defs>
<circle cx="10" cy="10" r="9.3" fill="url(#glb1)"/>
<path d="M4 5 Q6 3 8 4 L7 8 L5 10 L6 14 L4 12 Q3 8 4 5 Z M12 3 Q15 4 16 6 L13 7 Z" fill="#a8d0f8" opacity="0.75"/><path d="M15 8.5 A4.6 4.6 0 1 0 15.3 13.5" fill="none" stroke="#30b030" stroke-width="2.8"/><path d="M12.5 5.8 L18.2 6.2 L15.8 10.8 Z" fill="#30b030"/></svg>
<svg style="position:absolute;left:198px;top:26px;" width="20" height="20" viewBox="0 0 20 20"><defs><radialGradient id="glb2" cx="0.4" cy="0.35" r="0.75"><stop offset="0" stop-color="#6aa0e8"/><stop offset="0.65" stop-color="#2050b0"/><stop offset="1" stop-color="#0a2060"/></radialGradient></defs>
<circle cx="10" cy="10" r="9.3" fill="url(#glb2)"/>
<path d="M4 5 Q6 3 8 4 L7 8 L5 10 L6 14 L4 12 Q3 8 4 5 Z M12 3 Q15 4 16 6 L13 7 Z" fill="#a8d0f8" opacity="0.75"/><path d="M14.5 2 L10.5 10 L13 10 L10.5 18.5 L16 8 L13.5 8 L16.5 2 Z" fill="#f8d040" stroke="#c89000" stroke-width="0.4"/></svg>
<svg style="position:absolute;left:236px;top:24px;" width="22" height="23" viewBox="0 0 22 23"><defs><linearGradient id="cyl" x1="0" y1="0" x2="1" y2="0"><stop offset="0" stop-color="#b8b8b8"/><stop offset="0.4" stop-color="#f8f8f8"/><stop offset="1" stop-color="#a8a8a8"/></linearGradient></defs>
<rect x="5.5" y="0.8" width="4.2" height="18" rx="1.5" fill="url(#cyl)" stroke="#a0a0a0" stroke-width="0.4"/>
<rect x="10" y="0.8" width="4.2" height="18" rx="1.5" fill="url(#cyl)" stroke="#a0a0a0" stroke-width="0.4"/>
<path d="M2 20.8h15" stroke="#b0b0b0" stroke-width="1.2"/><path d="M6 22h8" stroke="#8a8a8a" stroke-width="1.2"/><path d="M15.5 10.5 L17.0 14.0 L20.7 14.3 L17.9 16.8 L18.7 20.4 L15.5 18.5 L12.3 20.4 L13.1 16.8 L10.3 14.3 L14.0 14.0 Z" fill="#f7d330" stroke="#c79a10" stroke-width="0.6"/></svg>
<svg style="position:absolute;left:266px;top:24px;" width="23" height="23" viewBox="0 0 23 23"><defs><radialGradient id="usr" cx="0.35" cy="0.3" r="0.8"><stop offset="0" stop-color="#7ab0f0"/><stop offset="0.6" stop-color="#2a5aa8"/><stop offset="1" stop-color="#16387a"/></radialGradient></defs>
<circle cx="8" cy="5" r="4.3" fill="url(#usr)"/><path d="M1.5 20.5 Q1 9.5 8 9.2 Q14.5 9.5 14 20.5 Q8 22.5 1.5 20.5 Z" fill="url(#usr)"/><path d="M17.5 10.5 L19.0 14.0 L22.7 14.3 L19.9 16.8 L20.7 20.4 L17.5 18.5 L14.3 20.4 L15.1 16.8 L12.3 14.3 L16.0 14.0 Z" fill="#f7d330" stroke="#c79a10" stroke-width="0.6"/></svg>
<svg style="position:absolute;left:296px;top:28px;" width="24" height="16" viewBox="0 0 24 16"><path d="M3 3 Q5 0.5 8 2 L9 5 L15 5 L16 2 Q19 0.5 21 3 L23.5 10 Q23.5 15 18.5 15 Q14 15 13.5 11 L10.5 11 Q10 15 5.5 15 Q0.5 15 0.5 10 Z" fill="#1e1e1e"/>
<circle cx="5.5" cy="10" r="3.2" fill="#5a3a1a"/><circle cx="18.5" cy="10" r="3.2" fill="#5a3a1a"/>
<circle cx="5.5" cy="10" r="1.8" fill="#c06a20"/><circle cx="18.5" cy="10" r="1.8" fill="#c06a20"/>
<path d="M9 4 L15 4" stroke="#555" stroke-width="1"/></svg>
<svg style="position:absolute;left:330px;top:24px;" width="18" height="23" viewBox="0 0 18 23"><defs><linearGradient id="cyl" x1="0" y1="0" x2="1" y2="0"><stop offset="0" stop-color="#b8b8b8"/><stop offset="0.4" stop-color="#f8f8f8"/><stop offset="1" stop-color="#a8a8a8"/></linearGradient></defs>
<rect x="5.5" y="0.8" width="4.2" height="18" rx="1.5" fill="url(#cyl)" stroke="#a0a0a0" stroke-width="0.4"/>
<rect x="10" y="0.8" width="4.2" height="18" rx="1.5" fill="url(#cyl)" stroke="#a0a0a0" stroke-width="0.4"/>
<path d="M2 20.8h15" stroke="#b0b0b0" stroke-width="1.2"/><path d="M6 22h8" stroke="#8a8a8a" stroke-width="1.2"/></svg>
<svg style="position:absolute;left:366px;top:25px;" width="23" height="23" viewBox="0 0 23 23"><defs><radialGradient id="g3" cx="0.6" cy="0.45" r="0.7"><stop offset="0" stop-color="#e8f4ff"/><stop offset="0.5" stop-color="#5a9ae8"/><stop offset="1" stop-color="#1a58c0"/></radialGradient>
<linearGradient id="hd3" x1="0" y1="0" x2="0" y2="1"><stop offset="0" stop-color="#f2f2f2"/><stop offset="1" stop-color="#bcbcbc"/></linearGradient></defs>
<circle cx="8" cy="8" r="7.3" fill="url(#g3)"/>
<rect x="9.5" y="10" width="12.5" height="11.5" rx="1" fill="url(#hd3)" stroke="#8a8a8a" stroke-width="0.6"/><rect x="10" y="19.5" width="11.5" height="2" fill="#5a5a5a"/>
<path d="M16.5 2.5 L21 8.5 L18.5 8.5 L18.5 12.5 L14.5 12.5 L14.5 8.5 L12 8.5 Z" fill="#e86a6a" stroke="#6a0a0a" stroke-width="0.7"/>
<path d="M5 10 L10 10 L10 15 L13 15 L7.5 21.5 L2 15 L5 15 Z" fill="#5ad040" stroke="#0a5a0a" stroke-width="0.7"/></svg>
<svg style="position:absolute;left:398px;top:24px;" width="21" height="24" viewBox="0 0 21 24"><defs><linearGradient id="hd" x1="0" y1="0" x2="0" y2="1"><stop offset="0" stop-color="#f4f4f4"/><stop offset="1" stop-color="#c4c4c4"/></linearGradient>
<linearGradient id="ar12" x1="0" y1="0" x2="0" y2="1"><stop offset="0" stop-color="#2aa02a"/><stop offset="1" stop-color="#a8f070"/></linearGradient></defs>
<rect x="1" y="5.5" width="18.5" height="17" rx="1.5" fill="url(#hd)" stroke="#7a7a7a" stroke-width="0.8"/>
<rect x="1.3" y="19" width="18" height="3.3" rx="1" fill="#4a4a4a"/><rect x="15" y="20" width="2" height="1" fill="#40c040"/>
<ellipse cx="10.25" cy="15.5" rx="6" ry="2" fill="#d8d8d8" stroke="#9a9a9a" stroke-width="0.5"/>
<path d="M6.5 0.5 L13.5 0.5 L13.5 7 L17.5 7 L10 15.5 L2.5 7 L6.5 7 Z" fill="url(#ar12)" stroke="#1a7a1a" stroke-width="0.6"/></svg>
<svg style="position:absolute;left:428px;top:25px;" width="23" height="22" viewBox="0 0 23 22"><rect x="2" y="1" width="14" height="20" fill="#eee5d4" stroke="#c9bca6" stroke-width="0.8"/>
<path d="M4 4h10M4 7h10M4 10h10M4 13h10M4 16h10" stroke="#b7a98f" stroke-width="0.6"/><path d="M12 8 L18 8 L18 13 L22 13 L15 21.5 L8 13 L12 13 Z" fill="#38b038" stroke="#2a8a2a" stroke-width="0.6"/></svg>
<svg style="position:absolute;left:459px;top:25px;" width="23" height="22" viewBox="0 0 23 22"><rect x="2" y="1" width="14" height="20" fill="#eee5d4" stroke="#c9bca6" stroke-width="0.8"/>
<path d="M4 4h10M4 7h10M4 10h10M4 13h10M4 16h10" stroke="#b7a98f" stroke-width="0.6"/><path d="M15 7 L22 15 L18 15 L18 21 L12 21 L12 15 L8 15 Z" fill="#b83828" stroke="#8a2a1a" stroke-width="0.6"/></svg>
<svg style="position:absolute;left:497px;top:24px;" width="23" height="23" viewBox="0 0 23 23"><path d="M13 1 L15 2 L12 10 L16 18 Q9 21 2 21 Q5 14 9 9 L12 9 Z" fill="#a8875a" stroke="#7a5a30" stroke-width="0.6"/>
<path d="M13 11 L21 19 M21 11 L13 19" stroke="#d82828" stroke-width="3"/></svg>
<svg style="position:absolute;left:529px;top:25px;" width="22" height="22" viewBox="0 0 22 22"><rect x="1.5" y="1.5" width="17" height="19" fill="#f2f2f2" stroke="#9a9a9a"/>
<path d="M4 5h12M4 8h12M4 11h6" stroke="#c8c8c8" stroke-width="0.8"/>
<circle cx="11" cy="12" r="5" fill="#b8daf8" stroke="#6a8ab8" stroke-width="1.4"/>
<path d="M14.5 15.5 L20 21" stroke="#8a8a8a" stroke-width="2.4"/></svg>
<svg style="position:absolute;left:560px;top:25px;" width="21" height="21" viewBox="0 0 21 21"><path d="M3.5 3.5 L17.5 17.5 M17.5 3.5 L3.5 17.5" stroke="#a80000" stroke-width="6" stroke-linecap="square"/>
<path d="M3.5 3.5 L17.5 17.5 M17.5 3.5 L3.5 17.5" stroke="#e01010" stroke-width="4.2" stroke-linecap="square"/>
<path d="M3.5 3.5 L10.5 10.5 L17.5 3.5" fill="none" stroke="#f07070" stroke-width="1.6"/></svg>
<svg style="position:absolute;left:597px;top:26px;" width="22" height="20" viewBox="0 0 22 20"><path d="M1 3 L8 3 L10 5 L20 5 L20 17 L1 17 Z" fill="#7ab0e8" stroke="#5a90c8" stroke-width="0.6"/>
<circle cx="9" cy="10" r="4.5" fill="#c8e4ff" stroke="#2a4a7a" stroke-width="1.4"/>
<path d="M12.5 13.5 L20 20" stroke="#8a8a8a" stroke-width="2"/></svg>
<svg style="position:absolute;left:628px;top:25px;" width="22" height="23" viewBox="0 0 22 23"><defs><radialGradient id="gf" cx="0.5" cy="0.4" r="0.7"><stop offset="0" stop-color="#e0f0ff"/><stop offset="0.6" stop-color="#6aaaf0"/><stop offset="1" stop-color="#3a78d0"/></radialGradient></defs>
<ellipse cx="6.5" cy="16" rx="4.5" ry="5" fill="#f8f8f8" stroke="#6a6a6a" stroke-width="0.7"/>
<ellipse cx="16.5" cy="11" rx="4.5" ry="6.5" fill="#f8f8f8" stroke="#6a6a6a" stroke-width="0.7"/>
<path d="M15 10 L19 10" stroke="#222" stroke-width="2"/>
<circle cx="8" cy="8" r="7" fill="url(#gf)" stroke="#8a8aa8" stroke-width="0.8"/>
<path d="M13.5 15 L19.5 21.5" stroke="#7a5a00" stroke-width="3.2"/><path d="M13.5 15 L19.5 21.5" stroke="#f2c020" stroke-width="2"/></svg>
<svg style="position:absolute;left:659px;top:25px;" width="22" height="23" viewBox="0 0 22 23"><defs><linearGradient id="shd" x1="0" y1="0" x2="1" y2="1"><stop offset="0" stop-color="#7a8aa0"/><stop offset="1" stop-color="#2a3444"/></linearGradient></defs>
<ellipse cx="5" cy="17" rx="4" ry="3.5" fill="#7a7674" opacity="0.6"/>
<path d="M12 1.5 Q15 3.5 19.5 3.5 L19.5 11 Q19.5 18 12 21.5 Q4.5 18 4.5 11 L4.5 3.5 Q9 3.5 12 1.5 Z" fill="url(#shd)" stroke="#a8c8f0" stroke-width="1"/>
<circle cx="12" cy="9.5" r="1.8" fill="#080808"/><path d="M11 10.5 L13 10.5 L13.2 16 L10.8 16 Z" fill="#080808"/></svg>
<svg style="position:absolute;left:690px;top:24px;" width="22" height="24" viewBox="0 0 22 24"><ellipse cx="11" cy="4" rx="8" ry="2.5" fill="#e8e8e8" stroke="#7a7a7a" stroke-width="0.8"/>
<ellipse cx="11" cy="4" rx="6" ry="1.3" fill="#111"/>
<path d="M3 4.5 Q9 10 9.5 13 L9.5 22 L12.5 22 L12.5 13 Q13 10 19 4.5" fill="#dadada" stroke="#8a8a8a" stroke-width="0.6"/></svg>
<svg style="position:absolute;left:729px;top:26px;" width="21" height="20" viewBox="0 0 21 20"><defs><linearGradient id="pwr" x1="0" y1="0" x2="0" y2="1"><stop offset="0" stop-color="#e85040"/><stop offset="0.5" stop-color="#c01810"/><stop offset="1" stop-color="#a01008"/></linearGradient></defs>
<rect x="0.5" y="0.5" width="20" height="19" rx="1.5" fill="url(#pwr)" stroke="#8a0a05" stroke-width="0.6"/>
<path d="M6.3 6 A5.3 5.3 0 1 0 14.7 6" fill="none" stroke="#f4e8e4" stroke-width="2"/>
<path d="M10.5 3 L10.5 9.5" stroke="#f4e8e4" stroke-width="2"/>
<path d="M4 18.3 L17 18.3" stroke="#f08030" stroke-width="1"/></svg>
<div style="position:absolute;left:757px;top:33px;width:5px;height:5px;background:#ecebea;border-radius:50%;box-shadow:0 0 1px #9a9693"></div>
<div style="position:absolute;left:764px;top:46px;width:676px;height:1px;background:#b3aeab"></div>
<div style="position:absolute;left:764px;top:47px;width:676px;height:1px;background:#eceae9"></div>
<div style="position:absolute;left:764px;top:25px;width:96px;height:22px;background:linear-gradient(#cdc9c6,#c2bebb);border:1px solid #aaa5a2;border-bottom:none;border-radius:5px 5px 0 0;box-sizing:border-box"></div>
<svg style="position:absolute;left:771px;top:28px" width="15" height="17" viewBox="0 0 15 17">
<rect x="2" y="0.5" width="2.5" height="14" fill="#e0e0e0" stroke="#9a9a9a" stroke-width="0.5"/>
<rect x="5" y="0.5" width="1.6" height="12" fill="#cfcfcf" stroke="#9a9a9a" stroke-width="0.5"/>
<path d="M0 15.5h9" stroke="#9a9a9a" stroke-width="1.2"/>
<rect x="3" y="7" width="11" height="8" fill="#eaf4ff" stroke="#8aa8c8" stroke-width="0.6"/><path d="M3 7 L8.5 11 L14 7" fill="none" stroke="#8aa8c8" stroke-width="0.6"/></svg>
<div class="t" style="left:787.62px;top:30px;font-size:11px;line-height:13px;color:#0e0d0c;font-weight:normal;letter-spacing:1.439px;">[+]</div>
<div class="t" style="left:808.04px;top:30px;font-size:11px;line-height:13px;color:#0e0d0c;font-weight:normal;letter-spacing:0.622px;">Interzet</div>
<div style="position:absolute;left:862px;top:25px;width:102px;height:22px;background:linear-gradient(#cdc9c6,#c2bebb);border:1px solid #aaa5a2;border-bottom:none;border-radius:5px 5px 0 0;box-sizing:border-box"></div>
<svg style="position:absolute;left:869px;top:28px" width="15" height="17" viewBox="0 0 15 17">
<rect x="2" y="0.5" width="2.5" height="14" fill="#e0e0e0" stroke="#9a9a9a" stroke-width="0.5"/>
<rect x="5" y="0.5" width="1.6" height="12" fill="#cfcfcf" stroke="#9a9a9a" stroke-width="0.5"/>
<path d="M0 15.5h9" stroke="#9a9a9a" stroke-width="1.2"/>
<rect x="3" y="7" width="11" height="8" fill="#eaf4ff" stroke="#8aa8c8" stroke-width="0.6"/><path d="M3 7 L8.5 11 L14 7" fill="none" stroke="#8aa8c8" stroke-width="0.6"/></svg>
<div class="t" style="left:885.10px;top:30px;font-size:11px;line-height:13px;color:#0e0d0c;font-weight:normal;letter-spacing:1.403px;">[+]</div>
<div class="t" style="left:905.36px;top:30px;font-size:11px;line-height:13px;color:#0e0d0c;font-weight:normal;letter-spacing:0.525px;">ENT.ZET</div>
<div style="position:absolute;left:966px;top:24px;width:124px;height:25px;background:linear-gradient(#e4e1df,#d6d2d0);border:1px solid #aaa5a2;border-bottom:none;border-radius:5px 5px 0 0;box-sizing:border-box;box-shadow:inset 0 1px 0 #f4f3f2"></div>
<svg style="position:absolute;left:972px;top:27px" width="13" height="17" viewBox="0 0 13 17">
<rect x="4" y="0.5" width="2.5" height="14" fill="#e4e4e4" stroke="#9a9a9a" stroke-width="0.5"/>
<rect x="7" y="0.5" width="1.6" height="12" fill="#cfcfcf" stroke="#9a9a9a" stroke-width="0.5"/>
<path d="M1 15.5h11" stroke="#9a9a9a" stroke-width="1.2"/></svg>
<div class="t" style="left:989.11px;top:29px;font-size:11px;line-height:13px;color:#0e0d0c;font-weight:normal;letter-spacing:1.421px;">[+]</div>
<div class="t" style="left:1009.58px;top:29px;font-size:11px;line-height:13px;color:#0e0d0c;font-weight:normal;letter-spacing:0.831px;">Bastion</div>
<div class="t" style="left:1055.91px;top:29px;font-size:11px;line-height:13px;color:#0e0d0c;font-weight:normal;letter-spacing:0.523px;">Hub</div>
<div style="position:absolute;left:1092px;top:25px;width:109px;height:22px;background:linear-gradient(#cdc9c6,#c2bebb);border:1px solid #aaa5a2;border-bottom:none;border-radius:5px 5px 0 0;box-sizing:border-box"></div>
<svg style="position:absolute;left:1098px;top:28px" width="13" height="17" viewBox="0 0 13 17">
<rect x="4" y="0.5" width="2.5" height="14" fill="#e4e4e4" stroke="#9a9a9a" stroke-width="0.5"/>
<rect x="7" y="0.5" width="1.6" height="12" fill="#cfcfcf" stroke="#9a9a9a" stroke-width="0.5"/>
<path d="M1 15.5h11" stroke="#9a9a9a" stroke-width="1.2"/></svg>
<div class="t" style="left:1114.07px;top:30px;font-size:11px;line-height:13px;color:#0e0d0c;font-weight:normal;letter-spacing:1.341px;">[+]</div>
<div class="t" style="left:1134.12px;top:30px;font-size:11px;line-height:13px;color:#0e0d0c;font-weight:normal;letter-spacing:0.512px;">Worm</div>
<div class="t" style="left:1169.17px;top:30px;font-size:11px;line-height:13px;color:#0e0d0c;font-weight:normal;letter-spacing:0.419px;">Hub</div>
<div style="position:absolute;left:1204px;top:25px;width:145px;height:22px;background:linear-gradient(#cdc9c6,#c2bebb);border:1px solid #aaa5a2;border-bottom:none;border-radius:5px 5px 0 0;box-sizing:border-box"></div>
<svg style="position:absolute;left:1209px;top:30px" width="17" height="12" viewBox="0 0 17 12">
<circle cx="4" cy="7.5" r="4" fill="#222"/><circle cx="13" cy="7.5" r="4" fill="#222"/><rect x="5" y="2" width="7" height="5" fill="#333"/>
<circle cx="4" cy="8" r="2" fill="#a05a20"/><circle cx="13" cy="8" r="2" fill="#a05a20"/></svg>
<div class="t" style="left:1226.84px;top:30px;font-size:11px;line-height:13px;color:#0e0d0c;font-weight:normal;letter-spacing:0.871px;">Поиск</div>
<div class="t" style="left:1265.38px;top:30px;font-size:11px;line-height:13px;color:#0e0d0c;font-weight:normal;letter-spacing:0.310px;">-</div>
<div class="t" style="left:1273.76px;top:30px;font-size:11px;line-height:13px;color:#0e0d0c;font-weight:normal;letter-spacing:1.152px;">rammstein</div>
<div style="position:absolute;left:1352px;top:25px;width:88px;height:22px;background:linear-gradient(#cdc9c6,#c2bebb);border:1px solid #aaa5a2;border-bottom:none;border-radius:5px 5px 0 0;box-sizing:border-box"></div>
<svg style="position:absolute;left:1357px;top:29px;" width="17" height="16" viewBox="0 0 17 16"><rect x="1" y="1" width="12" height="14" fill="#eee5d4" stroke="#c9bca6" stroke-width="0.6"/>
<rect x="3" y="8" width="13" height="7" rx="1" fill="#5a9ae8"/><ellipse cx="9" cy="7" rx="4" ry="4.5" fill="#222"/><ellipse cx="9" cy="8" rx="2.3" ry="2.5" fill="#e8e8e8"/></svg>
<div class="t" style="left:1374.58px;top:30px;font-size:11px;line-height:13px;color:#0e0d0c;font-weight:normal;letter-spacing:0.363px;">Спис</div>
<div style="position:absolute;left:1402px;top:26px;width:38px;height:20px;background:linear-gradient(90deg,rgba(214,210,208,0),#d6d2d0 3px)"></div>
<div style="position:absolute;left:1405px;top:28px;width:14px;height:15px;background:linear-gradient(#dedad8,#cfcbc8);border:1px solid #b8b3b0;border-radius:4px;box-sizing:border-box"></div>
<div style="position:absolute;left:1423px;top:28px;width:15px;height:15px;background:linear-gradient(#e4e0de,#d2ceca);border:1px solid #a8a3a0;border-radius:4px;box-sizing:border-box"></div>
<svg style="position:absolute;left:1407px;top:30px;" width="10" height="11" viewBox="0 0 10 11"><path d="M6.5 2 L3.5 5.5 L6.5 9" fill="none" stroke="#b5b0ad" stroke-width="1.5"/></svg>
<svg style="position:absolute;left:1425px;top:30px;" width="11" height="11" viewBox="0 0 11 11"><path d="M4 2 L7.5 5.5 L4 9" fill="none" stroke="#111" stroke-width="2.2"/></svg></div></body></html>
